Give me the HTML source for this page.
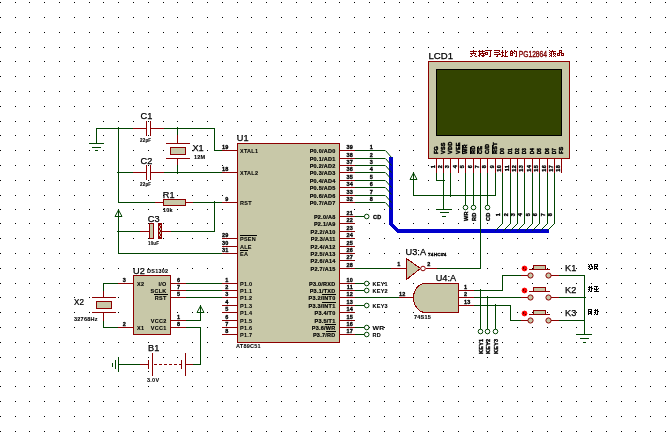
<!DOCTYPE html>
<html><head><meta charset="utf-8"><style>
html,body{margin:0;padding:0;background:#fff;}
svg{display:block;will-change:transform;}
text{font-family:"Liberation Sans",sans-serif;}
</style></head><body>
<svg width="666" height="432" viewBox="0 0 666 432" shape-rendering="crispEdges">
<rect width="666" height="432" fill="#fff"/>
<path d="M0 2h1v1h-1zM0 17h1v1h-1zM0 32h1v1h-1zM0 47h1v1h-1zM0 61h1v1h-1zM0 76h1v1h-1zM0 91h1v1h-1zM0 106h1v1h-1zM0 121h1v1h-1zM0 135h1v1h-1zM0 150h1v1h-1zM0 165h1v1h-1zM0 180h1v1h-1zM0 195h1v1h-1zM0 209h1v1h-1zM0 223h1v1h-1zM0 238h1v1h-1zM0 253h1v1h-1zM0 268h1v1h-1zM0 283h1v1h-1zM0 297h1v1h-1zM0 312h1v1h-1zM0 327h1v1h-1zM0 342h1v1h-1zM0 357h1v1h-1zM0 371h1v1h-1zM0 386h1v1h-1zM0 401h1v1h-1zM0 416h1v1h-1zM0 431h1v1h-1zM15 2h1v1h-1zM15 17h1v1h-1zM15 32h1v1h-1zM15 47h1v1h-1zM15 61h1v1h-1zM15 76h1v1h-1zM15 91h1v1h-1zM15 106h1v1h-1zM15 121h1v1h-1zM15 135h1v1h-1zM15 150h1v1h-1zM15 165h1v1h-1zM15 180h1v1h-1zM15 195h1v1h-1zM15 209h1v1h-1zM15 223h1v1h-1zM15 238h1v1h-1zM15 253h1v1h-1zM15 268h1v1h-1zM15 283h1v1h-1zM15 297h1v1h-1zM15 312h1v1h-1zM15 327h1v1h-1zM15 342h1v1h-1zM15 357h1v1h-1zM15 371h1v1h-1zM15 386h1v1h-1zM15 401h1v1h-1zM15 416h1v1h-1zM15 431h1v1h-1zM29 2h1v1h-1zM29 17h1v1h-1zM29 32h1v1h-1zM29 47h1v1h-1zM29 61h1v1h-1zM29 76h1v1h-1zM29 91h1v1h-1zM29 106h1v1h-1zM29 121h1v1h-1zM29 135h1v1h-1zM29 150h1v1h-1zM29 165h1v1h-1zM29 180h1v1h-1zM29 195h1v1h-1zM29 209h1v1h-1zM29 223h1v1h-1zM29 238h1v1h-1zM29 253h1v1h-1zM29 268h1v1h-1zM29 283h1v1h-1zM29 297h1v1h-1zM29 312h1v1h-1zM29 327h1v1h-1zM29 342h1v1h-1zM29 357h1v1h-1zM29 371h1v1h-1zM29 386h1v1h-1zM29 401h1v1h-1zM29 416h1v1h-1zM29 431h1v1h-1zM44 2h1v1h-1zM44 17h1v1h-1zM44 32h1v1h-1zM44 47h1v1h-1zM44 61h1v1h-1zM44 76h1v1h-1zM44 91h1v1h-1zM44 106h1v1h-1zM44 121h1v1h-1zM44 135h1v1h-1zM44 150h1v1h-1zM44 165h1v1h-1zM44 180h1v1h-1zM44 195h1v1h-1zM44 209h1v1h-1zM44 223h1v1h-1zM44 238h1v1h-1zM44 253h1v1h-1zM44 268h1v1h-1zM44 283h1v1h-1zM44 297h1v1h-1zM44 312h1v1h-1zM44 327h1v1h-1zM44 342h1v1h-1zM44 357h1v1h-1zM44 371h1v1h-1zM44 386h1v1h-1zM44 401h1v1h-1zM44 416h1v1h-1zM44 431h1v1h-1zM59 2h1v1h-1zM59 17h1v1h-1zM59 32h1v1h-1zM59 47h1v1h-1zM59 61h1v1h-1zM59 76h1v1h-1zM59 91h1v1h-1zM59 106h1v1h-1zM59 121h1v1h-1zM59 135h1v1h-1zM59 150h1v1h-1zM59 165h1v1h-1zM59 180h1v1h-1zM59 195h1v1h-1zM59 209h1v1h-1zM59 223h1v1h-1zM59 238h1v1h-1zM59 253h1v1h-1zM59 268h1v1h-1zM59 283h1v1h-1zM59 297h1v1h-1zM59 312h1v1h-1zM59 327h1v1h-1zM59 342h1v1h-1zM59 357h1v1h-1zM59 371h1v1h-1zM59 386h1v1h-1zM59 401h1v1h-1zM59 416h1v1h-1zM59 431h1v1h-1zM74 2h1v1h-1zM74 17h1v1h-1zM74 32h1v1h-1zM74 47h1v1h-1zM74 61h1v1h-1zM74 76h1v1h-1zM74 91h1v1h-1zM74 106h1v1h-1zM74 121h1v1h-1zM74 135h1v1h-1zM74 150h1v1h-1zM74 165h1v1h-1zM74 180h1v1h-1zM74 195h1v1h-1zM74 209h1v1h-1zM74 223h1v1h-1zM74 238h1v1h-1zM74 253h1v1h-1zM74 268h1v1h-1zM74 283h1v1h-1zM74 297h1v1h-1zM74 312h1v1h-1zM74 327h1v1h-1zM74 342h1v1h-1zM74 357h1v1h-1zM74 371h1v1h-1zM74 386h1v1h-1zM74 401h1v1h-1zM74 416h1v1h-1zM74 431h1v1h-1zM89 2h1v1h-1zM89 17h1v1h-1zM89 32h1v1h-1zM89 47h1v1h-1zM89 61h1v1h-1zM89 76h1v1h-1zM89 91h1v1h-1zM89 106h1v1h-1zM89 121h1v1h-1zM89 135h1v1h-1zM89 150h1v1h-1zM89 165h1v1h-1zM89 180h1v1h-1zM89 195h1v1h-1zM89 209h1v1h-1zM89 223h1v1h-1zM89 238h1v1h-1zM89 253h1v1h-1zM89 268h1v1h-1zM89 283h1v1h-1zM89 297h1v1h-1zM89 312h1v1h-1zM89 327h1v1h-1zM89 342h1v1h-1zM89 357h1v1h-1zM89 371h1v1h-1zM89 386h1v1h-1zM89 401h1v1h-1zM89 416h1v1h-1zM89 431h1v1h-1zM103 2h1v1h-1zM103 17h1v1h-1zM103 32h1v1h-1zM103 47h1v1h-1zM103 61h1v1h-1zM103 76h1v1h-1zM103 91h1v1h-1zM103 106h1v1h-1zM103 121h1v1h-1zM103 135h1v1h-1zM103 150h1v1h-1zM103 165h1v1h-1zM103 180h1v1h-1zM103 195h1v1h-1zM103 209h1v1h-1zM103 223h1v1h-1zM103 238h1v1h-1zM103 253h1v1h-1zM103 268h1v1h-1zM103 283h1v1h-1zM103 297h1v1h-1zM103 312h1v1h-1zM103 327h1v1h-1zM103 342h1v1h-1zM103 357h1v1h-1zM103 371h1v1h-1zM103 386h1v1h-1zM103 401h1v1h-1zM103 416h1v1h-1zM103 431h1v1h-1zM118 2h1v1h-1zM118 17h1v1h-1zM118 32h1v1h-1zM118 47h1v1h-1zM118 61h1v1h-1zM118 76h1v1h-1zM118 91h1v1h-1zM118 106h1v1h-1zM118 121h1v1h-1zM118 135h1v1h-1zM118 150h1v1h-1zM118 165h1v1h-1zM118 180h1v1h-1zM118 195h1v1h-1zM118 209h1v1h-1zM118 223h1v1h-1zM118 238h1v1h-1zM118 253h1v1h-1zM118 268h1v1h-1zM118 283h1v1h-1zM118 297h1v1h-1zM118 312h1v1h-1zM118 327h1v1h-1zM118 342h1v1h-1zM118 357h1v1h-1zM118 371h1v1h-1zM118 386h1v1h-1zM118 401h1v1h-1zM118 416h1v1h-1zM118 431h1v1h-1zM133 2h1v1h-1zM133 17h1v1h-1zM133 32h1v1h-1zM133 47h1v1h-1zM133 61h1v1h-1zM133 76h1v1h-1zM133 91h1v1h-1zM133 106h1v1h-1zM133 121h1v1h-1zM133 135h1v1h-1zM133 150h1v1h-1zM133 165h1v1h-1zM133 180h1v1h-1zM133 195h1v1h-1zM133 209h1v1h-1zM133 223h1v1h-1zM133 238h1v1h-1zM133 253h1v1h-1zM133 268h1v1h-1zM133 283h1v1h-1zM133 297h1v1h-1zM133 312h1v1h-1zM133 327h1v1h-1zM133 342h1v1h-1zM133 357h1v1h-1zM133 371h1v1h-1zM133 386h1v1h-1zM133 401h1v1h-1zM133 416h1v1h-1zM133 431h1v1h-1zM148 2h1v1h-1zM148 17h1v1h-1zM148 32h1v1h-1zM148 47h1v1h-1zM148 61h1v1h-1zM148 76h1v1h-1zM148 91h1v1h-1zM148 106h1v1h-1zM148 121h1v1h-1zM148 135h1v1h-1zM148 150h1v1h-1zM148 165h1v1h-1zM148 180h1v1h-1zM148 195h1v1h-1zM148 209h1v1h-1zM148 223h1v1h-1zM148 238h1v1h-1zM148 253h1v1h-1zM148 268h1v1h-1zM148 283h1v1h-1zM148 297h1v1h-1zM148 312h1v1h-1zM148 327h1v1h-1zM148 342h1v1h-1zM148 357h1v1h-1zM148 371h1v1h-1zM148 386h1v1h-1zM148 401h1v1h-1zM148 416h1v1h-1zM148 431h1v1h-1zM163 2h1v1h-1zM163 17h1v1h-1zM163 32h1v1h-1zM163 47h1v1h-1zM163 61h1v1h-1zM163 76h1v1h-1zM163 91h1v1h-1zM163 106h1v1h-1zM163 121h1v1h-1zM163 135h1v1h-1zM163 150h1v1h-1zM163 165h1v1h-1zM163 180h1v1h-1zM163 195h1v1h-1zM163 209h1v1h-1zM163 223h1v1h-1zM163 238h1v1h-1zM163 253h1v1h-1zM163 268h1v1h-1zM163 283h1v1h-1zM163 297h1v1h-1zM163 312h1v1h-1zM163 327h1v1h-1zM163 342h1v1h-1zM163 357h1v1h-1zM163 371h1v1h-1zM163 386h1v1h-1zM163 401h1v1h-1zM163 416h1v1h-1zM163 431h1v1h-1zM177 2h1v1h-1zM177 17h1v1h-1zM177 32h1v1h-1zM177 47h1v1h-1zM177 61h1v1h-1zM177 76h1v1h-1zM177 91h1v1h-1zM177 106h1v1h-1zM177 121h1v1h-1zM177 135h1v1h-1zM177 150h1v1h-1zM177 165h1v1h-1zM177 180h1v1h-1zM177 195h1v1h-1zM177 209h1v1h-1zM177 223h1v1h-1zM177 238h1v1h-1zM177 253h1v1h-1zM177 268h1v1h-1zM177 283h1v1h-1zM177 297h1v1h-1zM177 312h1v1h-1zM177 327h1v1h-1zM177 342h1v1h-1zM177 357h1v1h-1zM177 371h1v1h-1zM177 386h1v1h-1zM177 401h1v1h-1zM177 416h1v1h-1zM177 431h1v1h-1zM192 2h1v1h-1zM192 17h1v1h-1zM192 32h1v1h-1zM192 47h1v1h-1zM192 61h1v1h-1zM192 76h1v1h-1zM192 91h1v1h-1zM192 106h1v1h-1zM192 121h1v1h-1zM192 135h1v1h-1zM192 150h1v1h-1zM192 165h1v1h-1zM192 180h1v1h-1zM192 195h1v1h-1zM192 209h1v1h-1zM192 223h1v1h-1zM192 238h1v1h-1zM192 253h1v1h-1zM192 268h1v1h-1zM192 283h1v1h-1zM192 297h1v1h-1zM192 312h1v1h-1zM192 327h1v1h-1zM192 342h1v1h-1zM192 357h1v1h-1zM192 371h1v1h-1zM192 386h1v1h-1zM192 401h1v1h-1zM192 416h1v1h-1zM192 431h1v1h-1zM207 2h1v1h-1zM207 17h1v1h-1zM207 32h1v1h-1zM207 47h1v1h-1zM207 61h1v1h-1zM207 76h1v1h-1zM207 91h1v1h-1zM207 106h1v1h-1zM207 121h1v1h-1zM207 135h1v1h-1zM207 150h1v1h-1zM207 165h1v1h-1zM207 180h1v1h-1zM207 195h1v1h-1zM207 209h1v1h-1zM207 223h1v1h-1zM207 238h1v1h-1zM207 253h1v1h-1zM207 268h1v1h-1zM207 283h1v1h-1zM207 297h1v1h-1zM207 312h1v1h-1zM207 327h1v1h-1zM207 342h1v1h-1zM207 357h1v1h-1zM207 371h1v1h-1zM207 386h1v1h-1zM207 401h1v1h-1zM207 416h1v1h-1zM207 431h1v1h-1zM222 2h1v1h-1zM222 17h1v1h-1zM222 32h1v1h-1zM222 47h1v1h-1zM222 61h1v1h-1zM222 76h1v1h-1zM222 91h1v1h-1zM222 106h1v1h-1zM222 121h1v1h-1zM222 135h1v1h-1zM222 150h1v1h-1zM222 165h1v1h-1zM222 180h1v1h-1zM222 195h1v1h-1zM222 209h1v1h-1zM222 223h1v1h-1zM222 238h1v1h-1zM222 253h1v1h-1zM222 268h1v1h-1zM222 283h1v1h-1zM222 297h1v1h-1zM222 312h1v1h-1zM222 327h1v1h-1zM222 342h1v1h-1zM222 357h1v1h-1zM222 371h1v1h-1zM222 386h1v1h-1zM222 401h1v1h-1zM222 416h1v1h-1zM222 431h1v1h-1zM237 2h1v1h-1zM237 17h1v1h-1zM237 32h1v1h-1zM237 47h1v1h-1zM237 61h1v1h-1zM237 76h1v1h-1zM237 91h1v1h-1zM237 106h1v1h-1zM237 121h1v1h-1zM237 135h1v1h-1zM237 150h1v1h-1zM237 165h1v1h-1zM237 180h1v1h-1zM237 195h1v1h-1zM237 209h1v1h-1zM237 223h1v1h-1zM237 238h1v1h-1zM237 253h1v1h-1zM237 268h1v1h-1zM237 283h1v1h-1zM237 297h1v1h-1zM237 312h1v1h-1zM237 327h1v1h-1zM237 342h1v1h-1zM237 357h1v1h-1zM237 371h1v1h-1zM237 386h1v1h-1zM237 401h1v1h-1zM237 416h1v1h-1zM237 431h1v1h-1zM251 2h1v1h-1zM251 17h1v1h-1zM251 32h1v1h-1zM251 47h1v1h-1zM251 61h1v1h-1zM251 76h1v1h-1zM251 91h1v1h-1zM251 106h1v1h-1zM251 121h1v1h-1zM251 135h1v1h-1zM251 150h1v1h-1zM251 165h1v1h-1zM251 180h1v1h-1zM251 195h1v1h-1zM251 209h1v1h-1zM251 223h1v1h-1zM251 238h1v1h-1zM251 253h1v1h-1zM251 268h1v1h-1zM251 283h1v1h-1zM251 297h1v1h-1zM251 312h1v1h-1zM251 327h1v1h-1zM251 342h1v1h-1zM251 357h1v1h-1zM251 371h1v1h-1zM251 386h1v1h-1zM251 401h1v1h-1zM251 416h1v1h-1zM251 431h1v1h-1zM266 2h1v1h-1zM266 17h1v1h-1zM266 32h1v1h-1zM266 47h1v1h-1zM266 61h1v1h-1zM266 76h1v1h-1zM266 91h1v1h-1zM266 106h1v1h-1zM266 121h1v1h-1zM266 135h1v1h-1zM266 150h1v1h-1zM266 165h1v1h-1zM266 180h1v1h-1zM266 195h1v1h-1zM266 209h1v1h-1zM266 223h1v1h-1zM266 238h1v1h-1zM266 253h1v1h-1zM266 268h1v1h-1zM266 283h1v1h-1zM266 297h1v1h-1zM266 312h1v1h-1zM266 327h1v1h-1zM266 342h1v1h-1zM266 357h1v1h-1zM266 371h1v1h-1zM266 386h1v1h-1zM266 401h1v1h-1zM266 416h1v1h-1zM266 431h1v1h-1zM281 2h1v1h-1zM281 17h1v1h-1zM281 32h1v1h-1zM281 47h1v1h-1zM281 61h1v1h-1zM281 76h1v1h-1zM281 91h1v1h-1zM281 106h1v1h-1zM281 121h1v1h-1zM281 135h1v1h-1zM281 150h1v1h-1zM281 165h1v1h-1zM281 180h1v1h-1zM281 195h1v1h-1zM281 209h1v1h-1zM281 223h1v1h-1zM281 238h1v1h-1zM281 253h1v1h-1zM281 268h1v1h-1zM281 283h1v1h-1zM281 297h1v1h-1zM281 312h1v1h-1zM281 327h1v1h-1zM281 342h1v1h-1zM281 357h1v1h-1zM281 371h1v1h-1zM281 386h1v1h-1zM281 401h1v1h-1zM281 416h1v1h-1zM281 431h1v1h-1zM296 2h1v1h-1zM296 17h1v1h-1zM296 32h1v1h-1zM296 47h1v1h-1zM296 61h1v1h-1zM296 76h1v1h-1zM296 91h1v1h-1zM296 106h1v1h-1zM296 121h1v1h-1zM296 135h1v1h-1zM296 150h1v1h-1zM296 165h1v1h-1zM296 180h1v1h-1zM296 195h1v1h-1zM296 209h1v1h-1zM296 223h1v1h-1zM296 238h1v1h-1zM296 253h1v1h-1zM296 268h1v1h-1zM296 283h1v1h-1zM296 297h1v1h-1zM296 312h1v1h-1zM296 327h1v1h-1zM296 342h1v1h-1zM296 357h1v1h-1zM296 371h1v1h-1zM296 386h1v1h-1zM296 401h1v1h-1zM296 416h1v1h-1zM296 431h1v1h-1zM311 2h1v1h-1zM311 17h1v1h-1zM311 32h1v1h-1zM311 47h1v1h-1zM311 61h1v1h-1zM311 76h1v1h-1zM311 91h1v1h-1zM311 106h1v1h-1zM311 121h1v1h-1zM311 135h1v1h-1zM311 150h1v1h-1zM311 165h1v1h-1zM311 180h1v1h-1zM311 195h1v1h-1zM311 209h1v1h-1zM311 223h1v1h-1zM311 238h1v1h-1zM311 253h1v1h-1zM311 268h1v1h-1zM311 283h1v1h-1zM311 297h1v1h-1zM311 312h1v1h-1zM311 327h1v1h-1zM311 342h1v1h-1zM311 357h1v1h-1zM311 371h1v1h-1zM311 386h1v1h-1zM311 401h1v1h-1zM311 416h1v1h-1zM311 431h1v1h-1zM325 2h1v1h-1zM325 17h1v1h-1zM325 32h1v1h-1zM325 47h1v1h-1zM325 61h1v1h-1zM325 76h1v1h-1zM325 91h1v1h-1zM325 106h1v1h-1zM325 121h1v1h-1zM325 135h1v1h-1zM325 150h1v1h-1zM325 165h1v1h-1zM325 180h1v1h-1zM325 195h1v1h-1zM325 209h1v1h-1zM325 223h1v1h-1zM325 238h1v1h-1zM325 253h1v1h-1zM325 268h1v1h-1zM325 283h1v1h-1zM325 297h1v1h-1zM325 312h1v1h-1zM325 327h1v1h-1zM325 342h1v1h-1zM325 357h1v1h-1zM325 371h1v1h-1zM325 386h1v1h-1zM325 401h1v1h-1zM325 416h1v1h-1zM325 431h1v1h-1zM339 2h1v1h-1zM339 17h1v1h-1zM339 32h1v1h-1zM339 47h1v1h-1zM339 61h1v1h-1zM339 76h1v1h-1zM339 91h1v1h-1zM339 106h1v1h-1zM339 121h1v1h-1zM339 135h1v1h-1zM339 150h1v1h-1zM339 165h1v1h-1zM339 180h1v1h-1zM339 195h1v1h-1zM339 209h1v1h-1zM339 223h1v1h-1zM339 238h1v1h-1zM339 253h1v1h-1zM339 268h1v1h-1zM339 283h1v1h-1zM339 297h1v1h-1zM339 312h1v1h-1zM339 327h1v1h-1zM339 342h1v1h-1zM339 357h1v1h-1zM339 371h1v1h-1zM339 386h1v1h-1zM339 401h1v1h-1zM339 416h1v1h-1zM339 431h1v1h-1zM354 2h1v1h-1zM354 17h1v1h-1zM354 32h1v1h-1zM354 47h1v1h-1zM354 61h1v1h-1zM354 76h1v1h-1zM354 91h1v1h-1zM354 106h1v1h-1zM354 121h1v1h-1zM354 135h1v1h-1zM354 150h1v1h-1zM354 165h1v1h-1zM354 180h1v1h-1zM354 195h1v1h-1zM354 209h1v1h-1zM354 223h1v1h-1zM354 238h1v1h-1zM354 253h1v1h-1zM354 268h1v1h-1zM354 283h1v1h-1zM354 297h1v1h-1zM354 312h1v1h-1zM354 327h1v1h-1zM354 342h1v1h-1zM354 357h1v1h-1zM354 371h1v1h-1zM354 386h1v1h-1zM354 401h1v1h-1zM354 416h1v1h-1zM354 431h1v1h-1zM369 2h1v1h-1zM369 17h1v1h-1zM369 32h1v1h-1zM369 47h1v1h-1zM369 61h1v1h-1zM369 76h1v1h-1zM369 91h1v1h-1zM369 106h1v1h-1zM369 121h1v1h-1zM369 135h1v1h-1zM369 150h1v1h-1zM369 165h1v1h-1zM369 180h1v1h-1zM369 195h1v1h-1zM369 209h1v1h-1zM369 223h1v1h-1zM369 238h1v1h-1zM369 253h1v1h-1zM369 268h1v1h-1zM369 283h1v1h-1zM369 297h1v1h-1zM369 312h1v1h-1zM369 327h1v1h-1zM369 342h1v1h-1zM369 357h1v1h-1zM369 371h1v1h-1zM369 386h1v1h-1zM369 401h1v1h-1zM369 416h1v1h-1zM369 431h1v1h-1zM384 2h1v1h-1zM384 17h1v1h-1zM384 32h1v1h-1zM384 47h1v1h-1zM384 61h1v1h-1zM384 76h1v1h-1zM384 91h1v1h-1zM384 106h1v1h-1zM384 121h1v1h-1zM384 135h1v1h-1zM384 150h1v1h-1zM384 165h1v1h-1zM384 180h1v1h-1zM384 195h1v1h-1zM384 209h1v1h-1zM384 223h1v1h-1zM384 238h1v1h-1zM384 253h1v1h-1zM384 268h1v1h-1zM384 283h1v1h-1zM384 297h1v1h-1zM384 312h1v1h-1zM384 327h1v1h-1zM384 342h1v1h-1zM384 357h1v1h-1zM384 371h1v1h-1zM384 386h1v1h-1zM384 401h1v1h-1zM384 416h1v1h-1zM384 431h1v1h-1zM399 2h1v1h-1zM399 17h1v1h-1zM399 32h1v1h-1zM399 47h1v1h-1zM399 61h1v1h-1zM399 76h1v1h-1zM399 91h1v1h-1zM399 106h1v1h-1zM399 121h1v1h-1zM399 135h1v1h-1zM399 150h1v1h-1zM399 165h1v1h-1zM399 180h1v1h-1zM399 195h1v1h-1zM399 209h1v1h-1zM399 223h1v1h-1zM399 238h1v1h-1zM399 253h1v1h-1zM399 268h1v1h-1zM399 283h1v1h-1zM399 297h1v1h-1zM399 312h1v1h-1zM399 327h1v1h-1zM399 342h1v1h-1zM399 357h1v1h-1zM399 371h1v1h-1zM399 386h1v1h-1zM399 401h1v1h-1zM399 416h1v1h-1zM399 431h1v1h-1zM413 2h1v1h-1zM413 17h1v1h-1zM413 32h1v1h-1zM413 47h1v1h-1zM413 61h1v1h-1zM413 76h1v1h-1zM413 91h1v1h-1zM413 106h1v1h-1zM413 121h1v1h-1zM413 135h1v1h-1zM413 150h1v1h-1zM413 165h1v1h-1zM413 180h1v1h-1zM413 195h1v1h-1zM413 209h1v1h-1zM413 223h1v1h-1zM413 238h1v1h-1zM413 253h1v1h-1zM413 268h1v1h-1zM413 283h1v1h-1zM413 297h1v1h-1zM413 312h1v1h-1zM413 327h1v1h-1zM413 342h1v1h-1zM413 357h1v1h-1zM413 371h1v1h-1zM413 386h1v1h-1zM413 401h1v1h-1zM413 416h1v1h-1zM413 431h1v1h-1zM428 2h1v1h-1zM428 17h1v1h-1zM428 32h1v1h-1zM428 47h1v1h-1zM428 61h1v1h-1zM428 76h1v1h-1zM428 91h1v1h-1zM428 106h1v1h-1zM428 121h1v1h-1zM428 135h1v1h-1zM428 150h1v1h-1zM428 165h1v1h-1zM428 180h1v1h-1zM428 195h1v1h-1zM428 209h1v1h-1zM428 223h1v1h-1zM428 238h1v1h-1zM428 253h1v1h-1zM428 268h1v1h-1zM428 283h1v1h-1zM428 297h1v1h-1zM428 312h1v1h-1zM428 327h1v1h-1zM428 342h1v1h-1zM428 357h1v1h-1zM428 371h1v1h-1zM428 386h1v1h-1zM428 401h1v1h-1zM428 416h1v1h-1zM428 431h1v1h-1zM443 2h1v1h-1zM443 17h1v1h-1zM443 32h1v1h-1zM443 47h1v1h-1zM443 61h1v1h-1zM443 76h1v1h-1zM443 91h1v1h-1zM443 106h1v1h-1zM443 121h1v1h-1zM443 135h1v1h-1zM443 150h1v1h-1zM443 165h1v1h-1zM443 180h1v1h-1zM443 195h1v1h-1zM443 209h1v1h-1zM443 223h1v1h-1zM443 238h1v1h-1zM443 253h1v1h-1zM443 268h1v1h-1zM443 283h1v1h-1zM443 297h1v1h-1zM443 312h1v1h-1zM443 327h1v1h-1zM443 342h1v1h-1zM443 357h1v1h-1zM443 371h1v1h-1zM443 386h1v1h-1zM443 401h1v1h-1zM443 416h1v1h-1zM443 431h1v1h-1zM458 2h1v1h-1zM458 17h1v1h-1zM458 32h1v1h-1zM458 47h1v1h-1zM458 61h1v1h-1zM458 76h1v1h-1zM458 91h1v1h-1zM458 106h1v1h-1zM458 121h1v1h-1zM458 135h1v1h-1zM458 150h1v1h-1zM458 165h1v1h-1zM458 180h1v1h-1zM458 195h1v1h-1zM458 209h1v1h-1zM458 223h1v1h-1zM458 238h1v1h-1zM458 253h1v1h-1zM458 268h1v1h-1zM458 283h1v1h-1zM458 297h1v1h-1zM458 312h1v1h-1zM458 327h1v1h-1zM458 342h1v1h-1zM458 357h1v1h-1zM458 371h1v1h-1zM458 386h1v1h-1zM458 401h1v1h-1zM458 416h1v1h-1zM458 431h1v1h-1zM473 2h1v1h-1zM473 17h1v1h-1zM473 32h1v1h-1zM473 47h1v1h-1zM473 61h1v1h-1zM473 76h1v1h-1zM473 91h1v1h-1zM473 106h1v1h-1zM473 121h1v1h-1zM473 135h1v1h-1zM473 150h1v1h-1zM473 165h1v1h-1zM473 180h1v1h-1zM473 195h1v1h-1zM473 209h1v1h-1zM473 223h1v1h-1zM473 238h1v1h-1zM473 253h1v1h-1zM473 268h1v1h-1zM473 283h1v1h-1zM473 297h1v1h-1zM473 312h1v1h-1zM473 327h1v1h-1zM473 342h1v1h-1zM473 357h1v1h-1zM473 371h1v1h-1zM473 386h1v1h-1zM473 401h1v1h-1zM473 416h1v1h-1zM473 431h1v1h-1zM487 2h1v1h-1zM487 17h1v1h-1zM487 32h1v1h-1zM487 47h1v1h-1zM487 61h1v1h-1zM487 76h1v1h-1zM487 91h1v1h-1zM487 106h1v1h-1zM487 121h1v1h-1zM487 135h1v1h-1zM487 150h1v1h-1zM487 165h1v1h-1zM487 180h1v1h-1zM487 195h1v1h-1zM487 209h1v1h-1zM487 223h1v1h-1zM487 238h1v1h-1zM487 253h1v1h-1zM487 268h1v1h-1zM487 283h1v1h-1zM487 297h1v1h-1zM487 312h1v1h-1zM487 327h1v1h-1zM487 342h1v1h-1zM487 357h1v1h-1zM487 371h1v1h-1zM487 386h1v1h-1zM487 401h1v1h-1zM487 416h1v1h-1zM487 431h1v1h-1zM502 2h1v1h-1zM502 17h1v1h-1zM502 32h1v1h-1zM502 47h1v1h-1zM502 61h1v1h-1zM502 76h1v1h-1zM502 91h1v1h-1zM502 106h1v1h-1zM502 121h1v1h-1zM502 135h1v1h-1zM502 150h1v1h-1zM502 165h1v1h-1zM502 180h1v1h-1zM502 195h1v1h-1zM502 209h1v1h-1zM502 223h1v1h-1zM502 238h1v1h-1zM502 253h1v1h-1zM502 268h1v1h-1zM502 283h1v1h-1zM502 297h1v1h-1zM502 312h1v1h-1zM502 327h1v1h-1zM502 342h1v1h-1zM502 357h1v1h-1zM502 371h1v1h-1zM502 386h1v1h-1zM502 401h1v1h-1zM502 416h1v1h-1zM502 431h1v1h-1zM517 2h1v1h-1zM517 17h1v1h-1zM517 32h1v1h-1zM517 47h1v1h-1zM517 61h1v1h-1zM517 76h1v1h-1zM517 91h1v1h-1zM517 106h1v1h-1zM517 121h1v1h-1zM517 135h1v1h-1zM517 150h1v1h-1zM517 165h1v1h-1zM517 180h1v1h-1zM517 195h1v1h-1zM517 209h1v1h-1zM517 223h1v1h-1zM517 238h1v1h-1zM517 253h1v1h-1zM517 268h1v1h-1zM517 283h1v1h-1zM517 297h1v1h-1zM517 312h1v1h-1zM517 327h1v1h-1zM517 342h1v1h-1zM517 357h1v1h-1zM517 371h1v1h-1zM517 386h1v1h-1zM517 401h1v1h-1zM517 416h1v1h-1zM517 431h1v1h-1zM532 2h1v1h-1zM532 17h1v1h-1zM532 32h1v1h-1zM532 47h1v1h-1zM532 61h1v1h-1zM532 76h1v1h-1zM532 91h1v1h-1zM532 106h1v1h-1zM532 121h1v1h-1zM532 135h1v1h-1zM532 150h1v1h-1zM532 165h1v1h-1zM532 180h1v1h-1zM532 195h1v1h-1zM532 209h1v1h-1zM532 223h1v1h-1zM532 238h1v1h-1zM532 253h1v1h-1zM532 268h1v1h-1zM532 283h1v1h-1zM532 297h1v1h-1zM532 312h1v1h-1zM532 327h1v1h-1zM532 342h1v1h-1zM532 357h1v1h-1zM532 371h1v1h-1zM532 386h1v1h-1zM532 401h1v1h-1zM532 416h1v1h-1zM532 431h1v1h-1zM547 2h1v1h-1zM547 17h1v1h-1zM547 32h1v1h-1zM547 47h1v1h-1zM547 61h1v1h-1zM547 76h1v1h-1zM547 91h1v1h-1zM547 106h1v1h-1zM547 121h1v1h-1zM547 135h1v1h-1zM547 150h1v1h-1zM547 165h1v1h-1zM547 180h1v1h-1zM547 195h1v1h-1zM547 209h1v1h-1zM547 223h1v1h-1zM547 238h1v1h-1zM547 253h1v1h-1zM547 268h1v1h-1zM547 283h1v1h-1zM547 297h1v1h-1zM547 312h1v1h-1zM547 327h1v1h-1zM547 342h1v1h-1zM547 357h1v1h-1zM547 371h1v1h-1zM547 386h1v1h-1zM547 401h1v1h-1zM547 416h1v1h-1zM547 431h1v1h-1zM561 2h1v1h-1zM561 17h1v1h-1zM561 32h1v1h-1zM561 47h1v1h-1zM561 61h1v1h-1zM561 76h1v1h-1zM561 91h1v1h-1zM561 106h1v1h-1zM561 121h1v1h-1zM561 135h1v1h-1zM561 150h1v1h-1zM561 165h1v1h-1zM561 180h1v1h-1zM561 195h1v1h-1zM561 209h1v1h-1zM561 223h1v1h-1zM561 238h1v1h-1zM561 253h1v1h-1zM561 268h1v1h-1zM561 283h1v1h-1zM561 297h1v1h-1zM561 312h1v1h-1zM561 327h1v1h-1zM561 342h1v1h-1zM561 357h1v1h-1zM561 371h1v1h-1zM561 386h1v1h-1zM561 401h1v1h-1zM561 416h1v1h-1zM561 431h1v1h-1zM576 2h1v1h-1zM576 17h1v1h-1zM576 32h1v1h-1zM576 47h1v1h-1zM576 61h1v1h-1zM576 76h1v1h-1zM576 91h1v1h-1zM576 106h1v1h-1zM576 121h1v1h-1zM576 135h1v1h-1zM576 150h1v1h-1zM576 165h1v1h-1zM576 180h1v1h-1zM576 195h1v1h-1zM576 209h1v1h-1zM576 223h1v1h-1zM576 238h1v1h-1zM576 253h1v1h-1zM576 268h1v1h-1zM576 283h1v1h-1zM576 297h1v1h-1zM576 312h1v1h-1zM576 327h1v1h-1zM576 342h1v1h-1zM576 357h1v1h-1zM576 371h1v1h-1zM576 386h1v1h-1zM576 401h1v1h-1zM576 416h1v1h-1zM576 431h1v1h-1zM591 2h1v1h-1zM591 17h1v1h-1zM591 32h1v1h-1zM591 47h1v1h-1zM591 61h1v1h-1zM591 76h1v1h-1zM591 91h1v1h-1zM591 106h1v1h-1zM591 121h1v1h-1zM591 135h1v1h-1zM591 150h1v1h-1zM591 165h1v1h-1zM591 180h1v1h-1zM591 195h1v1h-1zM591 209h1v1h-1zM591 223h1v1h-1zM591 238h1v1h-1zM591 253h1v1h-1zM591 268h1v1h-1zM591 283h1v1h-1zM591 297h1v1h-1zM591 312h1v1h-1zM591 327h1v1h-1zM591 342h1v1h-1zM591 357h1v1h-1zM591 371h1v1h-1zM591 386h1v1h-1zM591 401h1v1h-1zM591 416h1v1h-1zM591 431h1v1h-1zM606 2h1v1h-1zM606 17h1v1h-1zM606 32h1v1h-1zM606 47h1v1h-1zM606 61h1v1h-1zM606 76h1v1h-1zM606 91h1v1h-1zM606 106h1v1h-1zM606 121h1v1h-1zM606 135h1v1h-1zM606 150h1v1h-1zM606 165h1v1h-1zM606 180h1v1h-1zM606 195h1v1h-1zM606 209h1v1h-1zM606 223h1v1h-1zM606 238h1v1h-1zM606 253h1v1h-1zM606 268h1v1h-1zM606 283h1v1h-1zM606 297h1v1h-1zM606 312h1v1h-1zM606 327h1v1h-1zM606 342h1v1h-1zM606 357h1v1h-1zM606 371h1v1h-1zM606 386h1v1h-1zM606 401h1v1h-1zM606 416h1v1h-1zM606 431h1v1h-1zM621 2h1v1h-1zM621 17h1v1h-1zM621 32h1v1h-1zM621 47h1v1h-1zM621 61h1v1h-1zM621 76h1v1h-1zM621 91h1v1h-1zM621 106h1v1h-1zM621 121h1v1h-1zM621 135h1v1h-1zM621 150h1v1h-1zM621 165h1v1h-1zM621 180h1v1h-1zM621 195h1v1h-1zM621 209h1v1h-1zM621 223h1v1h-1zM621 238h1v1h-1zM621 253h1v1h-1zM621 268h1v1h-1zM621 283h1v1h-1zM621 297h1v1h-1zM621 312h1v1h-1zM621 327h1v1h-1zM621 342h1v1h-1zM621 357h1v1h-1zM621 371h1v1h-1zM621 386h1v1h-1zM621 401h1v1h-1zM621 416h1v1h-1zM621 431h1v1h-1zM635 2h1v1h-1zM635 17h1v1h-1zM635 32h1v1h-1zM635 47h1v1h-1zM635 61h1v1h-1zM635 76h1v1h-1zM635 91h1v1h-1zM635 106h1v1h-1zM635 121h1v1h-1zM635 135h1v1h-1zM635 150h1v1h-1zM635 165h1v1h-1zM635 180h1v1h-1zM635 195h1v1h-1zM635 209h1v1h-1zM635 223h1v1h-1zM635 238h1v1h-1zM635 253h1v1h-1zM635 268h1v1h-1zM635 283h1v1h-1zM635 297h1v1h-1zM635 312h1v1h-1zM635 327h1v1h-1zM635 342h1v1h-1zM635 357h1v1h-1zM635 371h1v1h-1zM635 386h1v1h-1zM635 401h1v1h-1zM635 416h1v1h-1zM635 431h1v1h-1zM650 2h1v1h-1zM650 17h1v1h-1zM650 32h1v1h-1zM650 47h1v1h-1zM650 61h1v1h-1zM650 76h1v1h-1zM650 91h1v1h-1zM650 106h1v1h-1zM650 121h1v1h-1zM650 135h1v1h-1zM650 150h1v1h-1zM650 165h1v1h-1zM650 180h1v1h-1zM650 195h1v1h-1zM650 209h1v1h-1zM650 223h1v1h-1zM650 238h1v1h-1zM650 253h1v1h-1zM650 268h1v1h-1zM650 283h1v1h-1zM650 297h1v1h-1zM650 312h1v1h-1zM650 327h1v1h-1zM650 342h1v1h-1zM650 357h1v1h-1zM650 371h1v1h-1zM650 386h1v1h-1zM650 401h1v1h-1zM650 416h1v1h-1zM650 431h1v1h-1zM665 2h1v1h-1zM665 17h1v1h-1zM665 32h1v1h-1zM665 47h1v1h-1zM665 61h1v1h-1zM665 76h1v1h-1zM665 91h1v1h-1zM665 106h1v1h-1zM665 121h1v1h-1zM665 135h1v1h-1zM665 150h1v1h-1zM665 165h1v1h-1zM665 180h1v1h-1zM665 195h1v1h-1zM665 209h1v1h-1zM665 223h1v1h-1zM665 238h1v1h-1zM665 253h1v1h-1zM665 268h1v1h-1zM665 283h1v1h-1zM665 297h1v1h-1zM665 312h1v1h-1zM665 327h1v1h-1zM665 342h1v1h-1zM665 357h1v1h-1zM665 371h1v1h-1zM665 386h1v1h-1zM665 401h1v1h-1zM665 416h1v1h-1zM665 431h1v1h-1z" fill="#000"/>
<path d="M391 157V224L398 231H549" stroke="#0000cc" stroke-width="4" fill="none" stroke-linejoin="miter"/>
<rect x="96" y="128" width="1" height="16" fill="#004400"/>
<rect x="96" y="128" width="37" height="1" fill="#004400"/>
<rect x="89" y="143" width="15" height="1" fill="#004400"/>
<rect x="92" y="147" width="9" height="1" fill="#004400"/>
<rect x="95" y="150" width="3" height="1" fill="#004400"/>
<rect x="133" y="128" width="13" height="1" fill="#8c0000"/>
<rect x="146" y="121" width="1" height="15" fill="#8c0000"/>
<rect x="150" y="121" width="1" height="15" fill="#8c0000"/>
<rect x="151" y="128" width="13" height="1" fill="#8c0000"/>
<rect x="164" y="128" width="51" height="1" fill="#004400"/>
<rect x="214" y="128" width="1" height="23" fill="#004400"/>
<rect x="214" y="150" width="8" height="1" fill="#004400"/>
<rect x="118" y="128" width="1" height="75" fill="#004400"/>
<text x="140.5" y="119" font-size="9.2" font-weight="normal" text-anchor="start" fill="#000000" stroke="#000000" stroke-width="0.25">C1</text>
<text x="0" y="0" font-size="5.5" font-weight="bold" text-anchor="start" fill="#000000" transform="translate(140 142.3) scale(0.82 1)" letter-spacing="0.25" stroke="#000000" stroke-width="0.1">22pF</text>
<rect x="177" y="128" width="1" height="7" fill="#004400"/>
<rect x="177" y="135" width="1" height="9" fill="#8c0000"/>
<rect x="166" y="143" width="24" height="1" fill="#8c0000"/>
<rect x="170" y="147" width="16" height="8" fill="#8c0000"/>
<rect x="171" y="148" width="14" height="6" fill="#c8c8a8"/>
<rect x="166" y="158" width="24" height="1" fill="#8c0000"/>
<rect x="177" y="158" width="1" height="8" fill="#8c0000"/>
<rect x="177" y="165" width="1" height="8" fill="#004400"/>
<text x="192.4" y="151" font-size="9.2" font-weight="normal" text-anchor="start" fill="#000000" stroke="#000000" stroke-width="0.25">X1</text>
<text x="194" y="159" font-size="5.5" font-weight="bold" text-anchor="start" fill="#000000" letter-spacing="0.25" stroke="#000000" stroke-width="0.1">12M</text>
<rect x="118" y="172" width="15" height="1" fill="#004400"/>
<rect x="133" y="172" width="13" height="1" fill="#8c0000"/>
<rect x="146" y="165" width="1" height="15" fill="#8c0000"/>
<rect x="150" y="165" width="1" height="15" fill="#8c0000"/>
<rect x="151" y="172" width="13" height="1" fill="#8c0000"/>
<rect x="164" y="172" width="58" height="1" fill="#004400"/>
<text x="140.5" y="164" font-size="9.2" font-weight="normal" text-anchor="start" fill="#000000" stroke="#000000" stroke-width="0.25">C2</text>
<text x="0" y="0" font-size="5.5" font-weight="bold" text-anchor="start" fill="#000000" transform="translate(140 186) scale(0.82 1)" letter-spacing="0.25" stroke="#000000" stroke-width="0.1">22pF</text>
<rect x="118" y="202" width="37" height="1" fill="#004400"/>
<rect x="155" y="202" width="8" height="1" fill="#8c0000"/>
<rect x="163" y="199" width="23" height="7" fill="#8c0000"/>
<rect x="164" y="200" width="21" height="5" fill="#c8c8a8"/>
<rect x="186" y="202" width="7" height="1" fill="#8c0000"/>
<rect x="193" y="202" width="29" height="1" fill="#004400"/>
<rect x="214" y="202" width="1" height="30" fill="#004400"/>
<text x="162.8" y="198" font-size="9.2" font-weight="normal" text-anchor="start" fill="#000000" stroke="#000000" stroke-width="0.25">R1</text>
<text x="163" y="212" font-size="5.5" font-weight="bold" text-anchor="start" fill="#000000" letter-spacing="0.25" stroke="#000000" stroke-width="0.1">10k</text>
<path d="M118.5 210L122 216.5L115 216.5Z" stroke="#004400" stroke-width="1" fill="none" shape-rendering="geometricPrecision"/>
<rect x="118" y="209" width="1" height="45" fill="#004400"/>
<rect x="118" y="231" width="22" height="1" fill="#004400"/>
<rect x="140" y="231" width="9" height="1" fill="#8c0000"/>
<rect x="149" y="223" width="5" height="16" fill="#8c0000"/>
<rect x="150" y="224" width="3" height="14" fill="#c8c8a8"/>
<rect x="158" y="223" width="4" height="16" fill="#8c0000"/>
<rect x="160" y="225" width="1" height="1" fill="#d0d4b0"/>
<rect x="159" y="226" width="1" height="1" fill="#d0d4b0"/>
<rect x="159" y="227" width="1" height="1" fill="#d0d4b0"/>
<rect x="160" y="228" width="1" height="1" fill="#d0d4b0"/>
<rect x="160" y="229" width="1" height="1" fill="#d0d4b0"/>
<rect x="159" y="230" width="1" height="1" fill="#d0d4b0"/>
<rect x="159" y="231" width="1" height="1" fill="#d0d4b0"/>
<rect x="160" y="232" width="1" height="1" fill="#d0d4b0"/>
<rect x="160" y="233" width="1" height="1" fill="#d0d4b0"/>
<rect x="159" y="234" width="1" height="1" fill="#d0d4b0"/>
<rect x="159" y="235" width="1" height="1" fill="#d0d4b0"/>
<rect x="160" y="236" width="1" height="1" fill="#d0d4b0"/>
<rect x="162" y="231" width="9" height="1" fill="#8c0000"/>
<rect x="171" y="231" width="44" height="1" fill="#004400"/>
<text x="147.8" y="222" font-size="9.2" font-weight="normal" text-anchor="start" fill="#000000" stroke="#000000" stroke-width="0.25">C3</text>
<text x="0" y="0" font-size="5.5" font-weight="bold" text-anchor="start" fill="#000000" transform="translate(148 245) scale(0.8 1)" letter-spacing="0.25" stroke="#000000" stroke-width="0.1">10uF</text>
<rect x="118" y="253" width="104" height="1" fill="#004400"/>
<rect x="237" y="143" width="103" height="200" fill="#8c0000"/>
<rect x="238" y="144" width="101" height="198" fill="#c8c8a8"/>
<text x="236.8" y="141" font-size="9.2" font-weight="normal" text-anchor="start" fill="#000000" stroke="#000000" stroke-width="0.25">U1</text>
<rect x="222" y="150" width="15" height="1" fill="#8c0000"/>
<text x="228.5" y="148.5" font-size="5.5" font-weight="bold" text-anchor="end" fill="#000000" letter-spacing="0.25" stroke="#000000" stroke-width="0.32">19</text>
<text x="240" y="152.5" font-size="5.5" font-weight="bold" text-anchor="start" fill="#000000" letter-spacing="0.25" stroke="#000000" stroke-width="0.05">XTAL1</text>
<rect x="222" y="172" width="15" height="1" fill="#8c0000"/>
<text x="228.5" y="170.5" font-size="5.5" font-weight="bold" text-anchor="end" fill="#000000" letter-spacing="0.25" stroke="#000000" stroke-width="0.32">18</text>
<text x="240" y="174.5" font-size="5.5" font-weight="bold" text-anchor="start" fill="#000000" letter-spacing="0.25" stroke="#000000" stroke-width="0.05">XTAL2</text>
<rect x="222" y="202" width="15" height="1" fill="#8c0000"/>
<text x="228.5" y="200.5" font-size="5.5" font-weight="bold" text-anchor="end" fill="#000000" letter-spacing="0.25" stroke="#000000" stroke-width="0.32">9</text>
<text x="240" y="204.5" font-size="5.5" font-weight="bold" text-anchor="start" fill="#000000" letter-spacing="0.25" stroke="#000000" stroke-width="0.05">RST</text>
<rect x="222" y="238" width="15" height="1" fill="#8c0000"/>
<text x="228.5" y="236.5" font-size="5.5" font-weight="bold" text-anchor="end" fill="#000000" letter-spacing="0.25" stroke="#000000" stroke-width="0.32">29</text>
<text x="240" y="240.5" font-size="5.5" font-weight="bold" text-anchor="start" fill="#000000" letter-spacing="0.25" stroke="#000000" stroke-width="0.05">PSEN</text>
<rect x="222" y="246" width="15" height="1" fill="#8c0000"/>
<text x="228.5" y="244.5" font-size="5.5" font-weight="bold" text-anchor="end" fill="#000000" letter-spacing="0.25" stroke="#000000" stroke-width="0.32">30</text>
<text x="240" y="248.5" font-size="5.5" font-weight="bold" text-anchor="start" fill="#000000" letter-spacing="0.25" stroke="#000000" stroke-width="0.05">ALE</text>
<rect x="222" y="253" width="15" height="1" fill="#8c0000"/>
<text x="228.5" y="251.5" font-size="5.5" font-weight="bold" text-anchor="end" fill="#000000" letter-spacing="0.25" stroke="#000000" stroke-width="0.32">31</text>
<text x="240" y="255.5" font-size="5.5" font-weight="bold" text-anchor="start" fill="#000000" letter-spacing="0.25" stroke="#000000" stroke-width="0.05">EA</text>
<rect x="222" y="283" width="15" height="1" fill="#8c0000"/>
<text x="228.5" y="281.5" font-size="5.5" font-weight="bold" text-anchor="end" fill="#000000" letter-spacing="0.25" stroke="#000000" stroke-width="0.32">1</text>
<text x="240" y="285.5" font-size="5.5" font-weight="bold" text-anchor="start" fill="#000000" letter-spacing="0.25" stroke="#000000" stroke-width="0.05">P1.0</text>
<rect x="222" y="290" width="15" height="1" fill="#8c0000"/>
<text x="228.5" y="288.5" font-size="5.5" font-weight="bold" text-anchor="end" fill="#000000" letter-spacing="0.25" stroke="#000000" stroke-width="0.32">2</text>
<text x="240" y="292.5" font-size="5.5" font-weight="bold" text-anchor="start" fill="#000000" letter-spacing="0.25" stroke="#000000" stroke-width="0.05">P1.1</text>
<rect x="222" y="297" width="15" height="1" fill="#8c0000"/>
<text x="228.5" y="295.5" font-size="5.5" font-weight="bold" text-anchor="end" fill="#000000" letter-spacing="0.25" stroke="#000000" stroke-width="0.32">3</text>
<text x="240" y="299.5" font-size="5.5" font-weight="bold" text-anchor="start" fill="#000000" letter-spacing="0.25" stroke="#000000" stroke-width="0.05">P1.2</text>
<rect x="222" y="305" width="15" height="1" fill="#8c0000"/>
<text x="228.5" y="303.5" font-size="5.5" font-weight="bold" text-anchor="end" fill="#000000" letter-spacing="0.25" stroke="#000000" stroke-width="0.32">4</text>
<text x="240" y="307.5" font-size="5.5" font-weight="bold" text-anchor="start" fill="#000000" letter-spacing="0.25" stroke="#000000" stroke-width="0.05">P1.3</text>
<rect x="222" y="312" width="15" height="1" fill="#8c0000"/>
<text x="228.5" y="310.5" font-size="5.5" font-weight="bold" text-anchor="end" fill="#000000" letter-spacing="0.25" stroke="#000000" stroke-width="0.32">5</text>
<text x="240" y="314.5" font-size="5.5" font-weight="bold" text-anchor="start" fill="#000000" letter-spacing="0.25" stroke="#000000" stroke-width="0.05">P1.4</text>
<rect x="222" y="320" width="15" height="1" fill="#8c0000"/>
<text x="228.5" y="318.5" font-size="5.5" font-weight="bold" text-anchor="end" fill="#000000" letter-spacing="0.25" stroke="#000000" stroke-width="0.32">6</text>
<text x="240" y="322.5" font-size="5.5" font-weight="bold" text-anchor="start" fill="#000000" letter-spacing="0.25" stroke="#000000" stroke-width="0.05">P1.5</text>
<rect x="222" y="327" width="15" height="1" fill="#8c0000"/>
<text x="228.5" y="325.5" font-size="5.5" font-weight="bold" text-anchor="end" fill="#000000" letter-spacing="0.25" stroke="#000000" stroke-width="0.32">7</text>
<text x="240" y="329.5" font-size="5.5" font-weight="bold" text-anchor="start" fill="#000000" letter-spacing="0.25" stroke="#000000" stroke-width="0.05">P1.6</text>
<rect x="222" y="334" width="15" height="1" fill="#8c0000"/>
<text x="228.5" y="332.5" font-size="5.5" font-weight="bold" text-anchor="end" fill="#000000" letter-spacing="0.25" stroke="#000000" stroke-width="0.32">8</text>
<text x="240" y="336.5" font-size="5.5" font-weight="bold" text-anchor="start" fill="#000000" letter-spacing="0.25" stroke="#000000" stroke-width="0.05">P1.7</text>
<rect x="240" y="235" width="17" height="1" fill="#000000"/>
<rect x="240" y="250" width="8" height="1" fill="#000000"/>
<rect x="340" y="150" width="15" height="1" fill="#8c0000"/>
<text x="353" y="148.5" font-size="5.5" font-weight="bold" text-anchor="end" fill="#000000" letter-spacing="0.25" stroke="#000000" stroke-width="0.32">39</text>
<text x="335.5" y="152.5" font-size="5.5" font-weight="bold" text-anchor="end" fill="#000000" letter-spacing="0.25" stroke="#000000" stroke-width="0.2">P0.0/AD0</text>
<rect x="340" y="158" width="15" height="1" fill="#8c0000"/>
<text x="353" y="156.5" font-size="5.5" font-weight="bold" text-anchor="end" fill="#000000" letter-spacing="0.25" stroke="#000000" stroke-width="0.32">38</text>
<text x="335.5" y="160.5" font-size="5.5" font-weight="bold" text-anchor="end" fill="#000000" letter-spacing="0.25" stroke="#000000" stroke-width="0.2">P0.1/AD1</text>
<rect x="340" y="165" width="15" height="1" fill="#8c0000"/>
<text x="353" y="163.5" font-size="5.5" font-weight="bold" text-anchor="end" fill="#000000" letter-spacing="0.25" stroke="#000000" stroke-width="0.32">37</text>
<text x="335.5" y="167.5" font-size="5.5" font-weight="bold" text-anchor="end" fill="#000000" letter-spacing="0.25" stroke="#000000" stroke-width="0.2">P0.2/AD2</text>
<rect x="340" y="172" width="15" height="1" fill="#8c0000"/>
<text x="353" y="170.5" font-size="5.5" font-weight="bold" text-anchor="end" fill="#000000" letter-spacing="0.25" stroke="#000000" stroke-width="0.32">36</text>
<text x="335.5" y="174.5" font-size="5.5" font-weight="bold" text-anchor="end" fill="#000000" letter-spacing="0.25" stroke="#000000" stroke-width="0.2">P0.3/AD3</text>
<rect x="340" y="180" width="15" height="1" fill="#8c0000"/>
<text x="353" y="178.5" font-size="5.5" font-weight="bold" text-anchor="end" fill="#000000" letter-spacing="0.25" stroke="#000000" stroke-width="0.32">35</text>
<text x="335.5" y="182.5" font-size="5.5" font-weight="bold" text-anchor="end" fill="#000000" letter-spacing="0.25" stroke="#000000" stroke-width="0.2">P0.4/AD4</text>
<rect x="340" y="187" width="15" height="1" fill="#8c0000"/>
<text x="353" y="185.5" font-size="5.5" font-weight="bold" text-anchor="end" fill="#000000" letter-spacing="0.25" stroke="#000000" stroke-width="0.32">34</text>
<text x="335.5" y="189.5" font-size="5.5" font-weight="bold" text-anchor="end" fill="#000000" letter-spacing="0.25" stroke="#000000" stroke-width="0.2">P0.5/AD5</text>
<rect x="340" y="195" width="15" height="1" fill="#8c0000"/>
<text x="353" y="193.5" font-size="5.5" font-weight="bold" text-anchor="end" fill="#000000" letter-spacing="0.25" stroke="#000000" stroke-width="0.32">33</text>
<text x="335.5" y="197.5" font-size="5.5" font-weight="bold" text-anchor="end" fill="#000000" letter-spacing="0.25" stroke="#000000" stroke-width="0.2">P0.6/AD6</text>
<rect x="340" y="202" width="15" height="1" fill="#8c0000"/>
<text x="353" y="200.5" font-size="5.5" font-weight="bold" text-anchor="end" fill="#000000" letter-spacing="0.25" stroke="#000000" stroke-width="0.32">32</text>
<text x="335.5" y="204.5" font-size="5.5" font-weight="bold" text-anchor="end" fill="#000000" letter-spacing="0.25" stroke="#000000" stroke-width="0.2">P0.7/AD7</text>
<rect x="340" y="216" width="15" height="1" fill="#8c0000"/>
<text x="353" y="214.5" font-size="5.5" font-weight="bold" text-anchor="end" fill="#000000" letter-spacing="0.25" stroke="#000000" stroke-width="0.32">21</text>
<text x="335.5" y="218.5" font-size="5.5" font-weight="bold" text-anchor="end" fill="#000000" letter-spacing="0.25" stroke="#000000" stroke-width="0.2">P2.0/A8</text>
<rect x="340" y="223" width="15" height="1" fill="#8c0000"/>
<text x="353" y="221.5" font-size="5.5" font-weight="bold" text-anchor="end" fill="#000000" letter-spacing="0.25" stroke="#000000" stroke-width="0.32">22</text>
<text x="335.5" y="225.5" font-size="5.5" font-weight="bold" text-anchor="end" fill="#000000" letter-spacing="0.25" stroke="#000000" stroke-width="0.2">P2.1/A9</text>
<rect x="340" y="231" width="15" height="1" fill="#8c0000"/>
<text x="353" y="229.5" font-size="5.5" font-weight="bold" text-anchor="end" fill="#000000" letter-spacing="0.25" stroke="#000000" stroke-width="0.32">23</text>
<text x="335.5" y="233.5" font-size="5.5" font-weight="bold" text-anchor="end" fill="#000000" letter-spacing="0.25" stroke="#000000" stroke-width="0.2">P2.2/A10</text>
<rect x="340" y="238" width="15" height="1" fill="#8c0000"/>
<text x="353" y="236.5" font-size="5.5" font-weight="bold" text-anchor="end" fill="#000000" letter-spacing="0.25" stroke="#000000" stroke-width="0.32">24</text>
<text x="335.5" y="240.5" font-size="5.5" font-weight="bold" text-anchor="end" fill="#000000" letter-spacing="0.25" stroke="#000000" stroke-width="0.2">P2.3/A11</text>
<rect x="340" y="246" width="15" height="1" fill="#8c0000"/>
<text x="353" y="244.5" font-size="5.5" font-weight="bold" text-anchor="end" fill="#000000" letter-spacing="0.25" stroke="#000000" stroke-width="0.32">25</text>
<text x="335.5" y="248.5" font-size="5.5" font-weight="bold" text-anchor="end" fill="#000000" letter-spacing="0.25" stroke="#000000" stroke-width="0.2">P2.4/A12</text>
<rect x="340" y="253" width="15" height="1" fill="#8c0000"/>
<text x="353" y="251.5" font-size="5.5" font-weight="bold" text-anchor="end" fill="#000000" letter-spacing="0.25" stroke="#000000" stroke-width="0.32">26</text>
<text x="335.5" y="255.5" font-size="5.5" font-weight="bold" text-anchor="end" fill="#000000" letter-spacing="0.25" stroke="#000000" stroke-width="0.2">P2.5/A13</text>
<rect x="340" y="260" width="15" height="1" fill="#8c0000"/>
<text x="353" y="258.5" font-size="5.5" font-weight="bold" text-anchor="end" fill="#000000" letter-spacing="0.25" stroke="#000000" stroke-width="0.32">27</text>
<text x="335.5" y="262.5" font-size="5.5" font-weight="bold" text-anchor="end" fill="#000000" letter-spacing="0.25" stroke="#000000" stroke-width="0.2">P2.6/A14</text>
<rect x="340" y="268" width="15" height="1" fill="#8c0000"/>
<text x="353" y="266.5" font-size="5.5" font-weight="bold" text-anchor="end" fill="#000000" letter-spacing="0.25" stroke="#000000" stroke-width="0.32">28</text>
<text x="335.5" y="270.5" font-size="5.5" font-weight="bold" text-anchor="end" fill="#000000" letter-spacing="0.25" stroke="#000000" stroke-width="0.2">P2.7/A15</text>
<rect x="340" y="283" width="15" height="1" fill="#8c0000"/>
<text x="353" y="281.5" font-size="5.5" font-weight="bold" text-anchor="end" fill="#000000" letter-spacing="0.25" stroke="#000000" stroke-width="0.32">10</text>
<text x="335.5" y="285.5" font-size="5.5" font-weight="bold" text-anchor="end" fill="#000000" letter-spacing="0.25" stroke="#000000" stroke-width="0.2">P3.0/RXD</text>
<rect x="340" y="290" width="15" height="1" fill="#8c0000"/>
<text x="353" y="288.5" font-size="5.5" font-weight="bold" text-anchor="end" fill="#000000" letter-spacing="0.25" stroke="#000000" stroke-width="0.32">11</text>
<text x="335.5" y="292.5" font-size="5.5" font-weight="bold" text-anchor="end" fill="#000000" letter-spacing="0.25" stroke="#000000" stroke-width="0.2">P3.1/TXD</text>
<rect x="340" y="297" width="15" height="1" fill="#8c0000"/>
<text x="353" y="295.5" font-size="5.5" font-weight="bold" text-anchor="end" fill="#000000" letter-spacing="0.25" stroke="#000000" stroke-width="0.32">12</text>
<text x="335.5" y="299.5" font-size="5.5" font-weight="bold" text-anchor="end" fill="#000000" letter-spacing="0.25" stroke="#000000" stroke-width="0.2">P3.2/INT0</text>
<rect x="340" y="305" width="15" height="1" fill="#8c0000"/>
<text x="353" y="303.5" font-size="5.5" font-weight="bold" text-anchor="end" fill="#000000" letter-spacing="0.25" stroke="#000000" stroke-width="0.32">13</text>
<text x="335.5" y="307.5" font-size="5.5" font-weight="bold" text-anchor="end" fill="#000000" letter-spacing="0.25" stroke="#000000" stroke-width="0.2">P3.3/INT1</text>
<rect x="340" y="312" width="15" height="1" fill="#8c0000"/>
<text x="353" y="310.5" font-size="5.5" font-weight="bold" text-anchor="end" fill="#000000" letter-spacing="0.25" stroke="#000000" stroke-width="0.32">14</text>
<text x="335.5" y="314.5" font-size="5.5" font-weight="bold" text-anchor="end" fill="#000000" letter-spacing="0.25" stroke="#000000" stroke-width="0.2">P3.4/T0</text>
<rect x="340" y="320" width="15" height="1" fill="#8c0000"/>
<text x="353" y="318.5" font-size="5.5" font-weight="bold" text-anchor="end" fill="#000000" letter-spacing="0.25" stroke="#000000" stroke-width="0.32">15</text>
<text x="335.5" y="322.5" font-size="5.5" font-weight="bold" text-anchor="end" fill="#000000" letter-spacing="0.25" stroke="#000000" stroke-width="0.2">P3.5/T1</text>
<rect x="340" y="327" width="15" height="1" fill="#8c0000"/>
<text x="353" y="325.5" font-size="5.5" font-weight="bold" text-anchor="end" fill="#000000" letter-spacing="0.25" stroke="#000000" stroke-width="0.32">16</text>
<text x="335.5" y="329.5" font-size="5.5" font-weight="bold" text-anchor="end" fill="#000000" letter-spacing="0.25" stroke="#000000" stroke-width="0.2">P3.6/WR</text>
<rect x="340" y="334" width="15" height="1" fill="#8c0000"/>
<text x="353" y="332.5" font-size="5.5" font-weight="bold" text-anchor="end" fill="#000000" letter-spacing="0.25" stroke="#000000" stroke-width="0.32">17</text>
<text x="335.5" y="336.5" font-size="5.5" font-weight="bold" text-anchor="end" fill="#000000" letter-spacing="0.25" stroke="#000000" stroke-width="0.2">P3.7/RD</text>
<rect x="322" y="294" width="14" height="1" fill="#000000"/>
<rect x="322" y="302" width="14" height="1" fill="#000000"/>
<rect x="325" y="324" width="11" height="1" fill="#000000"/>
<rect x="326" y="331" width="10" height="1" fill="#000000"/>
<text x="236" y="348" font-size="5.5" font-weight="bold" text-anchor="start" fill="#000000" letter-spacing="0.25" stroke="#000000" stroke-width="0.05">AT89C51</text>
<rect x="355" y="150" width="30" height="1" fill="#004400"/>
<path d="M385.5 150.5L391.5 157.5" stroke="#004400" stroke-width="1" fill="none" shape-rendering="geometricPrecision"/>
<text x="371.5" y="148.5" font-size="5.5" font-weight="bold" text-anchor="middle" fill="#000000" letter-spacing="0.25" stroke="#000000" stroke-width="0.32">1</text>
<rect x="355" y="158" width="30" height="1" fill="#004400"/>
<path d="M385.5 158.5L391.5 165.5" stroke="#004400" stroke-width="1" fill="none" shape-rendering="geometricPrecision"/>
<text x="371.5" y="156.5" font-size="5.5" font-weight="bold" text-anchor="middle" fill="#000000" letter-spacing="0.25" stroke="#000000" stroke-width="0.32">2</text>
<rect x="355" y="165" width="30" height="1" fill="#004400"/>
<path d="M385.5 165.5L391.5 172.5" stroke="#004400" stroke-width="1" fill="none" shape-rendering="geometricPrecision"/>
<text x="371.5" y="163.5" font-size="5.5" font-weight="bold" text-anchor="middle" fill="#000000" letter-spacing="0.25" stroke="#000000" stroke-width="0.32">3</text>
<rect x="355" y="172" width="30" height="1" fill="#004400"/>
<path d="M385.5 172.5L391.5 179.5" stroke="#004400" stroke-width="1" fill="none" shape-rendering="geometricPrecision"/>
<text x="371.5" y="170.5" font-size="5.5" font-weight="bold" text-anchor="middle" fill="#000000" letter-spacing="0.25" stroke="#000000" stroke-width="0.32">4</text>
<rect x="355" y="180" width="30" height="1" fill="#004400"/>
<path d="M385.5 180.5L391.5 187.5" stroke="#004400" stroke-width="1" fill="none" shape-rendering="geometricPrecision"/>
<text x="371.5" y="178.5" font-size="5.5" font-weight="bold" text-anchor="middle" fill="#000000" letter-spacing="0.25" stroke="#000000" stroke-width="0.32">5</text>
<rect x="355" y="187" width="30" height="1" fill="#004400"/>
<path d="M385.5 187.5L391.5 194.5" stroke="#004400" stroke-width="1" fill="none" shape-rendering="geometricPrecision"/>
<text x="371.5" y="185.5" font-size="5.5" font-weight="bold" text-anchor="middle" fill="#000000" letter-spacing="0.25" stroke="#000000" stroke-width="0.32">6</text>
<rect x="355" y="195" width="30" height="1" fill="#004400"/>
<path d="M385.5 195.5L391.5 202.5" stroke="#004400" stroke-width="1" fill="none" shape-rendering="geometricPrecision"/>
<text x="371.5" y="193.5" font-size="5.5" font-weight="bold" text-anchor="middle" fill="#000000" letter-spacing="0.25" stroke="#000000" stroke-width="0.32">7</text>
<rect x="355" y="202" width="30" height="1" fill="#004400"/>
<path d="M385.5 202.5L391.5 209.5" stroke="#004400" stroke-width="1" fill="none" shape-rendering="geometricPrecision"/>
<text x="371.5" y="200.5" font-size="5.5" font-weight="bold" text-anchor="middle" fill="#000000" letter-spacing="0.25" stroke="#000000" stroke-width="0.32">8</text>
<rect x="355" y="216" width="10" height="1" fill="#004400"/>
<circle cx="366.7" cy="216.5" r="2.3" stroke="#004400" stroke-width="1" fill="#fff" shape-rendering="geometricPrecision"/>
<text x="373" y="218.5" font-size="5.5" font-weight="bold" text-anchor="start" fill="#000000" letter-spacing="0.25" stroke="#000000" stroke-width="0.32">CD</text>
<rect x="355" y="268" width="36" height="1" fill="#004400"/>
<rect x="391" y="268" width="16" height="1" fill="#8c0000"/>
<rect x="355" y="283" width="10" height="1" fill="#004400"/>
<circle cx="366.7" cy="283.5" r="2.3" stroke="#004400" stroke-width="1" fill="#fff" shape-rendering="geometricPrecision"/>
<text x="372.5" y="285.5" font-size="5.5" font-weight="bold" text-anchor="start" fill="#000000" letter-spacing="0.25" stroke="#000000" stroke-width="0.08">KEY1</text>
<rect x="355" y="290" width="10" height="1" fill="#004400"/>
<circle cx="366.7" cy="290.5" r="2.3" stroke="#004400" stroke-width="1" fill="#fff" shape-rendering="geometricPrecision"/>
<text x="372.5" y="292.5" font-size="5.5" font-weight="bold" text-anchor="start" fill="#000000" letter-spacing="0.25" stroke="#000000" stroke-width="0.08">KEY2</text>
<rect x="355" y="305" width="10" height="1" fill="#004400"/>
<circle cx="366.7" cy="305.5" r="2.3" stroke="#004400" stroke-width="1" fill="#fff" shape-rendering="geometricPrecision"/>
<text x="372.5" y="307.5" font-size="5.5" font-weight="bold" text-anchor="start" fill="#000000" letter-spacing="0.25" stroke="#000000" stroke-width="0.08">KEY3</text>
<rect x="355" y="327" width="10" height="1" fill="#004400"/>
<circle cx="366.7" cy="327.5" r="2.3" stroke="#004400" stroke-width="1" fill="#fff" shape-rendering="geometricPrecision"/>
<text x="0" y="0" font-size="5.5" font-weight="bold" text-anchor="start" fill="#000000" transform="translate(372.5 329.5) scale(1.25 1)" letter-spacing="0.25" stroke="#000000" stroke-width="0.08">WR</text>
<rect x="355" y="334" width="10" height="1" fill="#004400"/>
<circle cx="366.7" cy="334.5" r="2.3" stroke="#004400" stroke-width="1" fill="#fff" shape-rendering="geometricPrecision"/>
<text x="372.5" y="336.5" font-size="5.5" font-weight="bold" text-anchor="start" fill="#000000" letter-spacing="0.25" stroke="#000000" stroke-width="0.08">RD</text>
<rect x="355" y="297" width="44" height="1" fill="#004400"/>
<rect x="399" y="297" width="15" height="1" fill="#8c0000"/>
<rect x="428" y="61" width="142" height="98" fill="#8c0000"/>
<rect x="429" y="62" width="140" height="96" fill="#c8c8a8"/>
<rect x="436" y="69" width="126" height="67" fill="#000000"/>
<rect x="437" y="70" width="124" height="65" fill="#334400"/>
<text x="428.5" y="59" font-size="9.6" font-weight="normal" text-anchor="start" fill="#000000" stroke="#000000" stroke-width="0.25">LCD1</text>
<rect x="436" y="159" width="1" height="14" fill="#8c0000"/>
<text x="0" y="0" font-size="5.5" font-weight="bold" text-anchor="start" fill="#000000" transform="translate(438 154) rotate(-90)" letter-spacing="0.25" stroke="#000000" stroke-width="0.45">FG</text>
<text x="0" y="0" font-size="5.5" font-weight="bold" text-anchor="end" fill="#000000" transform="translate(434.5 165) rotate(-90)" letter-spacing="0.25" stroke="#000000" stroke-width="0.32">1</text>
<rect x="443" y="159" width="1" height="14" fill="#8c0000"/>
<text x="0" y="0" font-size="5.5" font-weight="bold" text-anchor="start" fill="#000000" transform="translate(445 154) rotate(-90)" letter-spacing="0.25" stroke="#000000" stroke-width="0.45">VSS</text>
<text x="0" y="0" font-size="5.5" font-weight="bold" text-anchor="end" fill="#000000" transform="translate(441.5 165) rotate(-90)" letter-spacing="0.25" stroke="#000000" stroke-width="0.32">2</text>
<rect x="450" y="159" width="1" height="14" fill="#8c0000"/>
<text x="0" y="0" font-size="5.5" font-weight="bold" text-anchor="start" fill="#000000" transform="translate(452 154) rotate(-90)" letter-spacing="0.25" stroke="#000000" stroke-width="0.45">VDD</text>
<text x="0" y="0" font-size="5.5" font-weight="bold" text-anchor="end" fill="#000000" transform="translate(448.5 165) rotate(-90)" letter-spacing="0.25" stroke="#000000" stroke-width="0.32">3</text>
<rect x="458" y="159" width="1" height="14" fill="#8c0000"/>
<text x="0" y="0" font-size="5.5" font-weight="bold" text-anchor="start" fill="#000000" transform="translate(460 154) rotate(-90)" letter-spacing="0.25" stroke="#000000" stroke-width="0.45">VEE</text>
<text x="0" y="0" font-size="5.5" font-weight="bold" text-anchor="end" fill="#000000" transform="translate(456.5 165) rotate(-90)" letter-spacing="0.25" stroke="#000000" stroke-width="0.32">4</text>
<rect x="465" y="159" width="1" height="14" fill="#8c0000"/>
<text x="0" y="0" font-size="5.5" font-weight="bold" text-anchor="start" fill="#000000" transform="translate(467 154) rotate(-90)" letter-spacing="0.25" stroke="#000000" stroke-width="0.45">WR</text>
<rect x="462" y="145" width="1" height="9" fill="#000000"/>
<text x="0" y="0" font-size="5.5" font-weight="bold" text-anchor="end" fill="#000000" transform="translate(463.5 165) rotate(-90)" letter-spacing="0.25" stroke="#000000" stroke-width="0.32">5</text>
<rect x="473" y="159" width="1" height="14" fill="#8c0000"/>
<text x="0" y="0" font-size="5.5" font-weight="bold" text-anchor="start" fill="#000000" transform="translate(475 154) rotate(-90)" letter-spacing="0.25" stroke="#000000" stroke-width="0.45">RD</text>
<rect x="470" y="147" width="1" height="7" fill="#000000"/>
<text x="0" y="0" font-size="5.5" font-weight="bold" text-anchor="end" fill="#000000" transform="translate(471.5 165) rotate(-90)" letter-spacing="0.25" stroke="#000000" stroke-width="0.32">6</text>
<rect x="480" y="159" width="1" height="14" fill="#8c0000"/>
<text x="0" y="0" font-size="5.5" font-weight="bold" text-anchor="start" fill="#000000" transform="translate(482 154) rotate(-90)" letter-spacing="0.25" stroke="#000000" stroke-width="0.45">CE</text>
<rect x="477" y="147" width="1" height="7" fill="#000000"/>
<text x="0" y="0" font-size="5.5" font-weight="bold" text-anchor="end" fill="#000000" transform="translate(478.5 165) rotate(-90)" letter-spacing="0.25" stroke="#000000" stroke-width="0.32">7</text>
<rect x="487" y="159" width="1" height="14" fill="#8c0000"/>
<text x="0" y="0" font-size="5.5" font-weight="bold" text-anchor="start" fill="#000000" transform="translate(489 154) rotate(-90)" letter-spacing="0.25" stroke="#000000" stroke-width="0.45">C/D</text>
<text x="0" y="0" font-size="5.5" font-weight="bold" text-anchor="end" fill="#000000" transform="translate(485.5 165) rotate(-90)" letter-spacing="0.25" stroke="#000000" stroke-width="0.32">8</text>
<rect x="495" y="159" width="1" height="14" fill="#8c0000"/>
<text x="0" y="0" font-size="5.5" font-weight="bold" text-anchor="start" fill="#000000" transform="translate(497 154) rotate(-90)" letter-spacing="0.25" stroke="#000000" stroke-width="0.45">RST</text>
<rect x="492" y="145" width="1" height="9" fill="#000000"/>
<text x="0" y="0" font-size="5.5" font-weight="bold" text-anchor="end" fill="#000000" transform="translate(493.5 165) rotate(-90)" letter-spacing="0.25" stroke="#000000" stroke-width="0.32">9</text>
<rect x="502" y="159" width="1" height="14" fill="#8c0000"/>
<text x="0" y="0" font-size="5.5" font-weight="bold" text-anchor="start" fill="#000000" transform="translate(504 154) rotate(-90) scale(0.8 1)" letter-spacing="0.25" stroke="#000000" stroke-width="0.45">D0</text>
<text x="0" y="0" font-size="5.5" font-weight="bold" text-anchor="end" fill="#000000" transform="translate(500.5 165) rotate(-90)" letter-spacing="0.25" stroke="#000000" stroke-width="0.32">10</text>
<rect x="510" y="159" width="1" height="14" fill="#8c0000"/>
<text x="0" y="0" font-size="5.5" font-weight="bold" text-anchor="start" fill="#000000" transform="translate(512 154) rotate(-90) scale(0.8 1)" letter-spacing="0.25" stroke="#000000" stroke-width="0.45">D1</text>
<text x="0" y="0" font-size="5.5" font-weight="bold" text-anchor="end" fill="#000000" transform="translate(508.5 165) rotate(-90)" letter-spacing="0.25" stroke="#000000" stroke-width="0.32">11</text>
<rect x="517" y="159" width="1" height="14" fill="#8c0000"/>
<text x="0" y="0" font-size="5.5" font-weight="bold" text-anchor="start" fill="#000000" transform="translate(519 154) rotate(-90) scale(0.8 1)" letter-spacing="0.25" stroke="#000000" stroke-width="0.45">D2</text>
<text x="0" y="0" font-size="5.5" font-weight="bold" text-anchor="end" fill="#000000" transform="translate(515.5 165) rotate(-90)" letter-spacing="0.25" stroke="#000000" stroke-width="0.32">12</text>
<rect x="524" y="159" width="1" height="14" fill="#8c0000"/>
<text x="0" y="0" font-size="5.5" font-weight="bold" text-anchor="start" fill="#000000" transform="translate(526 154) rotate(-90) scale(0.8 1)" letter-spacing="0.25" stroke="#000000" stroke-width="0.45">D3</text>
<text x="0" y="0" font-size="5.5" font-weight="bold" text-anchor="end" fill="#000000" transform="translate(522.5 165) rotate(-90)" letter-spacing="0.25" stroke="#000000" stroke-width="0.32">13</text>
<rect x="532" y="159" width="1" height="14" fill="#8c0000"/>
<text x="0" y="0" font-size="5.5" font-weight="bold" text-anchor="start" fill="#000000" transform="translate(534 154) rotate(-90) scale(0.8 1)" letter-spacing="0.25" stroke="#000000" stroke-width="0.45">D4</text>
<text x="0" y="0" font-size="5.5" font-weight="bold" text-anchor="end" fill="#000000" transform="translate(530.5 165) rotate(-90)" letter-spacing="0.25" stroke="#000000" stroke-width="0.32">14</text>
<rect x="539" y="159" width="1" height="14" fill="#8c0000"/>
<text x="0" y="0" font-size="5.5" font-weight="bold" text-anchor="start" fill="#000000" transform="translate(541 154) rotate(-90) scale(0.8 1)" letter-spacing="0.25" stroke="#000000" stroke-width="0.45">D5</text>
<text x="0" y="0" font-size="5.5" font-weight="bold" text-anchor="end" fill="#000000" transform="translate(537.5 165) rotate(-90)" letter-spacing="0.25" stroke="#000000" stroke-width="0.32">15</text>
<rect x="547" y="159" width="1" height="14" fill="#8c0000"/>
<text x="0" y="0" font-size="5.5" font-weight="bold" text-anchor="start" fill="#000000" transform="translate(549 154) rotate(-90) scale(0.8 1)" letter-spacing="0.25" stroke="#000000" stroke-width="0.45">D6</text>
<text x="0" y="0" font-size="5.5" font-weight="bold" text-anchor="end" fill="#000000" transform="translate(545.5 165) rotate(-90)" letter-spacing="0.25" stroke="#000000" stroke-width="0.32">16</text>
<rect x="554" y="159" width="1" height="14" fill="#8c0000"/>
<text x="0" y="0" font-size="5.5" font-weight="bold" text-anchor="start" fill="#000000" transform="translate(556 154) rotate(-90) scale(0.8 1)" letter-spacing="0.25" stroke="#000000" stroke-width="0.45">D7</text>
<text x="0" y="0" font-size="5.5" font-weight="bold" text-anchor="end" fill="#000000" transform="translate(552.5 165) rotate(-90)" letter-spacing="0.25" stroke="#000000" stroke-width="0.32">17</text>
<rect x="561" y="159" width="1" height="14" fill="#8c0000"/>
<text x="0" y="0" font-size="5.5" font-weight="bold" text-anchor="start" fill="#000000" transform="translate(563 154) rotate(-90)" letter-spacing="0.25" stroke="#000000" stroke-width="0.45">FS</text>
<text x="0" y="0" font-size="5.5" font-weight="bold" text-anchor="end" fill="#000000" transform="translate(559.5 165) rotate(-90)" letter-spacing="0.25" stroke="#000000" stroke-width="0.32">18</text>
<rect x="436" y="173" width="1" height="8" fill="#004400"/>
<rect x="436" y="180" width="8" height="1" fill="#004400"/>
<rect x="443" y="173" width="1" height="37" fill="#004400"/>
<rect x="436" y="209" width="16" height="1" fill="#004400"/>
<rect x="440" y="212" width="9" height="1" fill="#004400"/>
<rect x="442" y="216" width="4" height="1" fill="#004400"/>
<rect x="450" y="173" width="1" height="23" fill="#004400"/>
<path d="M413.5 173L417 179.5L410 179.5Z" stroke="#004400" stroke-width="1" fill="none" shape-rendering="geometricPrecision"/>
<rect x="413" y="172" width="1" height="24" fill="#004400"/>
<rect x="413" y="195" width="83" height="1" fill="#004400"/>
<rect x="465" y="173" width="1" height="33" fill="#004400"/>
<circle cx="465.5" cy="207.5" r="2.3" stroke="#004400" stroke-width="1" fill="#fff" shape-rendering="geometricPrecision"/>
<text x="0" y="0" font-size="5.5" font-weight="bold" text-anchor="start" fill="#000000" transform="translate(467.5 221) rotate(-90)" letter-spacing="0.25" stroke="#000000" stroke-width="0.32">WR</text>
<rect x="473" y="173" width="1" height="33" fill="#004400"/>
<circle cx="473.5" cy="207.5" r="2.3" stroke="#004400" stroke-width="1" fill="#fff" shape-rendering="geometricPrecision"/>
<text x="0" y="0" font-size="5.5" font-weight="bold" text-anchor="start" fill="#000000" transform="translate(475.5 221) rotate(-90)" letter-spacing="0.25" stroke="#000000" stroke-width="0.32">RD</text>
<rect x="487" y="173" width="1" height="33" fill="#004400"/>
<circle cx="487.5" cy="207.5" r="2.3" stroke="#004400" stroke-width="1" fill="#fff" shape-rendering="geometricPrecision"/>
<text x="0" y="0" font-size="5.5" font-weight="bold" text-anchor="start" fill="#000000" transform="translate(489.5 221) rotate(-90)" letter-spacing="0.25" stroke="#000000" stroke-width="0.32">CD</text>
<rect x="480" y="173" width="1" height="96" fill="#004400"/>
<rect x="495" y="173" width="1" height="23" fill="#004400"/>
<rect x="502" y="173" width="1" height="51" fill="#004400"/>
<path d="M502.5 223.5L495.5 230.5" stroke="#004400" stroke-width="1" fill="none" shape-rendering="geometricPrecision"/>
<text x="0" y="0" font-size="5.5" font-weight="bold" text-anchor="middle" fill="#000000" transform="translate(499.8 214.5) rotate(-90)" letter-spacing="0.25" stroke="#000000" stroke-width="0.32">1</text>
<rect x="510" y="173" width="1" height="51" fill="#004400"/>
<path d="M510.5 223.5L503.5 230.5" stroke="#004400" stroke-width="1" fill="none" shape-rendering="geometricPrecision"/>
<text x="0" y="0" font-size="5.5" font-weight="bold" text-anchor="middle" fill="#000000" transform="translate(507.8 214.5) rotate(-90)" letter-spacing="0.25" stroke="#000000" stroke-width="0.32">2</text>
<rect x="517" y="173" width="1" height="51" fill="#004400"/>
<path d="M517.5 223.5L510.5 230.5" stroke="#004400" stroke-width="1" fill="none" shape-rendering="geometricPrecision"/>
<text x="0" y="0" font-size="5.5" font-weight="bold" text-anchor="middle" fill="#000000" transform="translate(514.8 214.5) rotate(-90)" letter-spacing="0.25" stroke="#000000" stroke-width="0.32">3</text>
<rect x="524" y="173" width="1" height="51" fill="#004400"/>
<path d="M524.5 223.5L517.5 230.5" stroke="#004400" stroke-width="1" fill="none" shape-rendering="geometricPrecision"/>
<text x="0" y="0" font-size="5.5" font-weight="bold" text-anchor="middle" fill="#000000" transform="translate(521.8 214.5) rotate(-90)" letter-spacing="0.25" stroke="#000000" stroke-width="0.32">4</text>
<rect x="532" y="173" width="1" height="51" fill="#004400"/>
<path d="M532.5 223.5L525.5 230.5" stroke="#004400" stroke-width="1" fill="none" shape-rendering="geometricPrecision"/>
<text x="0" y="0" font-size="5.5" font-weight="bold" text-anchor="middle" fill="#000000" transform="translate(529.8 214.5) rotate(-90)" letter-spacing="0.25" stroke="#000000" stroke-width="0.32">5</text>
<rect x="539" y="173" width="1" height="51" fill="#004400"/>
<path d="M539.5 223.5L532.5 230.5" stroke="#004400" stroke-width="1" fill="none" shape-rendering="geometricPrecision"/>
<text x="0" y="0" font-size="5.5" font-weight="bold" text-anchor="middle" fill="#000000" transform="translate(536.8 214.5) rotate(-90)" letter-spacing="0.25" stroke="#000000" stroke-width="0.32">6</text>
<rect x="547" y="173" width="1" height="51" fill="#004400"/>
<path d="M547.5 223.5L540.5 230.5" stroke="#004400" stroke-width="1" fill="none" shape-rendering="geometricPrecision"/>
<text x="0" y="0" font-size="5.5" font-weight="bold" text-anchor="middle" fill="#000000" transform="translate(544.8 214.5) rotate(-90)" letter-spacing="0.25" stroke="#000000" stroke-width="0.32">7</text>
<rect x="554" y="173" width="1" height="51" fill="#004400"/>
<path d="M554.5 223.5L547.5 230.5" stroke="#004400" stroke-width="1" fill="none" shape-rendering="geometricPrecision"/>
<text x="0" y="0" font-size="5.5" font-weight="bold" text-anchor="middle" fill="#000000" transform="translate(551.8 214.5) rotate(-90)" letter-spacing="0.25" stroke="#000000" stroke-width="0.32">8</text>
<rect x="133" y="275" width="38" height="60" fill="#8c0000"/>
<rect x="134" y="276" width="36" height="58" fill="#c8c8a8"/>
<text x="133" y="274" font-size="9.2" font-weight="normal" text-anchor="start" fill="#000000" stroke="#000000" stroke-width="0.25">U2</text>
<text x="147" y="273" font-size="5.5" font-weight="bold" text-anchor="start" fill="#000000" letter-spacing="0.25" stroke="#000000" stroke-width="0.05">DS1302</text>
<rect x="118" y="283" width="15" height="1" fill="#8c0000"/>
<rect x="103" y="283" width="15" height="1" fill="#004400"/>
<text x="126" y="281.5" font-size="5.5" font-weight="bold" text-anchor="end" fill="#000000" letter-spacing="0.25" stroke="#000000" stroke-width="0.32">3</text>
<text x="137" y="285.5" font-size="5.5" font-weight="bold" text-anchor="start" fill="#000000" letter-spacing="0.25" stroke="#000000" stroke-width="0.1">X2</text>
<rect x="118" y="327" width="15" height="1" fill="#8c0000"/>
<rect x="103" y="327" width="15" height="1" fill="#004400"/>
<text x="126" y="325.5" font-size="5.5" font-weight="bold" text-anchor="end" fill="#000000" letter-spacing="0.25" stroke="#000000" stroke-width="0.32">2</text>
<text x="137" y="329.5" font-size="5.5" font-weight="bold" text-anchor="start" fill="#000000" letter-spacing="0.25" stroke="#000000" stroke-width="0.1">X1</text>
<rect x="171" y="283" width="15" height="1" fill="#8c0000"/>
<text x="177" y="281.5" font-size="5.5" font-weight="bold" text-anchor="start" fill="#000000" letter-spacing="0.25" stroke="#000000" stroke-width="0.32">6</text>
<text x="166.5" y="285.5" font-size="5.5" font-weight="bold" text-anchor="end" fill="#000000" letter-spacing="0.25" stroke="#000000" stroke-width="0.1">I/O</text>
<rect x="171" y="290" width="15" height="1" fill="#8c0000"/>
<text x="177" y="288.5" font-size="5.5" font-weight="bold" text-anchor="start" fill="#000000" letter-spacing="0.25" stroke="#000000" stroke-width="0.32">7</text>
<text x="166.5" y="292.5" font-size="5.5" font-weight="bold" text-anchor="end" fill="#000000" letter-spacing="0.25" stroke="#000000" stroke-width="0.1">SCLK</text>
<rect x="171" y="297" width="15" height="1" fill="#8c0000"/>
<text x="177" y="295.5" font-size="5.5" font-weight="bold" text-anchor="start" fill="#000000" letter-spacing="0.25" stroke="#000000" stroke-width="0.32">5</text>
<text x="166.5" y="299.5" font-size="5.5" font-weight="bold" text-anchor="end" fill="#000000" letter-spacing="0.25" stroke="#000000" stroke-width="0.1">RST</text>
<rect x="171" y="320" width="15" height="1" fill="#8c0000"/>
<text x="177" y="318.5" font-size="5.5" font-weight="bold" text-anchor="start" fill="#000000" letter-spacing="0.25" stroke="#000000" stroke-width="0.32">1</text>
<text x="166.5" y="322.5" font-size="5.5" font-weight="bold" text-anchor="end" fill="#000000" letter-spacing="0.25" stroke="#000000" stroke-width="0.1">VCC2</text>
<rect x="171" y="327" width="15" height="1" fill="#8c0000"/>
<text x="177" y="325.5" font-size="5.5" font-weight="bold" text-anchor="start" fill="#000000" letter-spacing="0.25" stroke="#000000" stroke-width="0.32">8</text>
<text x="166.5" y="329.5" font-size="5.5" font-weight="bold" text-anchor="end" fill="#000000" letter-spacing="0.25" stroke="#000000" stroke-width="0.1">VCC1</text>
<rect x="154" y="294" width="14" height="1" fill="#000000"/>
<rect x="103" y="283" width="1" height="8" fill="#004400"/>
<rect x="103" y="291" width="1" height="7" fill="#8c0000"/>
<rect x="92" y="297" width="24" height="1" fill="#8c0000"/>
<rect x="96" y="301" width="16" height="8" fill="#8c0000"/>
<rect x="97" y="302" width="14" height="6" fill="#c8c8a8"/>
<rect x="92" y="312" width="24" height="1" fill="#8c0000"/>
<rect x="103" y="313" width="1" height="8" fill="#8c0000"/>
<rect x="103" y="321" width="1" height="7" fill="#004400"/>
<text x="0" y="0" font-size="9.2" font-weight="normal" text-anchor="start" fill="#000000" transform="translate(74 305) scale(0.88 1)" stroke="#000000" stroke-width="0.25">X2</text>
<text x="74" y="320.7" font-size="5.5" font-weight="bold" text-anchor="start" fill="#000000" letter-spacing="0.25" stroke="#000000" stroke-width="0.1">32768Hz</text>
<rect x="186" y="283" width="36" height="1" fill="#004400"/>
<rect x="186" y="290" width="36" height="1" fill="#004400"/>
<rect x="186" y="297" width="36" height="1" fill="#004400"/>
<rect x="186" y="320" width="15" height="1" fill="#004400"/>
<path d="M200.5 306L204 312.5L197 312.5Z" stroke="#004400" stroke-width="1" fill="none" shape-rendering="geometricPrecision"/>
<rect x="200" y="305" width="1" height="16" fill="#004400"/>
<rect x="186" y="327" width="15" height="1" fill="#004400"/>
<rect x="200" y="327" width="1" height="38" fill="#004400"/>
<rect x="193" y="364" width="8" height="1" fill="#004400"/>
<rect x="186" y="364" width="7" height="1" fill="#8c0000"/>
<rect x="185" y="353" width="1" height="23" fill="#8c0000"/>
<rect x="181" y="360" width="1" height="9" fill="#8c0000"/>
<path d="M154 364.5H181" stroke="#8c0000" stroke-width="1" stroke-dasharray="3 2" fill="none"/>
<rect x="152" y="353" width="1" height="23" fill="#8c0000"/>
<rect x="148" y="360" width="1" height="9" fill="#8c0000"/>
<rect x="140" y="364" width="8" height="1" fill="#8c0000"/>
<rect x="118" y="364" width="22" height="1" fill="#004400"/>
<rect x="118" y="357" width="1" height="15" fill="#004400"/>
<rect x="115" y="360" width="1" height="9" fill="#004400"/>
<rect x="112" y="363" width="1" height="4" fill="#004400"/>
<text x="148" y="351" font-size="9.2" font-weight="normal" text-anchor="start" fill="#000000" stroke="#000000" stroke-width="0.25">B1</text>
<text x="147" y="382" font-size="5.5" font-weight="bold" text-anchor="start" fill="#000000" letter-spacing="0.25" stroke="#000000" stroke-width="0.05">3.0V</text>
<text x="405.6" y="255.2" font-size="9.2" font-weight="normal" text-anchor="start" fill="#000000" stroke="#000000" stroke-width="0.25">U3:A</text>
<text x="0" y="0" font-size="4.4" font-weight="bold" text-anchor="start" fill="#000000" transform="translate(428 256) scale(1.05 1)" letter-spacing="0.25" stroke="#000000" stroke-width="0.32">74HC04</text>
<path d="M406.5 258.5L420.5 268.5L406.5 279.5Z" stroke="#8c0000" stroke-width="1" fill="#c8c8a8"/>
<circle cx="423" cy="268.5" r="2.3" stroke="#8c0000" stroke-width="1" fill="#fff" shape-rendering="geometricPrecision"/>
<text x="399" y="266" font-size="5.5" font-weight="bold" text-anchor="middle" fill="#000000" letter-spacing="0.25" stroke="#000000" stroke-width="0.32">1</text>
<text x="429" y="266" font-size="5.5" font-weight="bold" text-anchor="middle" fill="#000000" letter-spacing="0.25" stroke="#000000" stroke-width="0.32">2</text>
<rect x="426" y="268" width="11" height="1" fill="#8c0000"/>
<rect x="437" y="268" width="44" height="1" fill="#004400"/>
<path d="M458.5 283.5H425.5A12 14 0 0 0 413.5 297.5A12 15 0 0 0 425.5 312.5H458.5Z" stroke="#8c0000" stroke-width="1" fill="#c8c8a8"/>
<text x="435.7" y="281" font-size="9.2" font-weight="normal" text-anchor="start" fill="#000000" stroke="#000000" stroke-width="0.25">U4:A</text>
<text x="414" y="319" font-size="5.5" font-weight="bold" text-anchor="start" fill="#000000" letter-spacing="0.25" stroke="#000000" stroke-width="0.1">74S15</text>
<text x="402.2" y="295.5" font-size="5.5" font-weight="bold" text-anchor="middle" fill="#000000" letter-spacing="0.25" stroke="#000000" stroke-width="0.32">12</text>
<rect x="459" y="290" width="15" height="1" fill="#8c0000"/>
<text x="464" y="288.5" font-size="5.5" font-weight="bold" text-anchor="start" fill="#000000" letter-spacing="0.25" stroke="#000000" stroke-width="0.32">1</text>
<rect x="459" y="297" width="15" height="1" fill="#8c0000"/>
<text x="464" y="295.5" font-size="5.5" font-weight="bold" text-anchor="start" fill="#000000" letter-spacing="0.25" stroke="#000000" stroke-width="0.32">2</text>
<rect x="459" y="305" width="15" height="1" fill="#8c0000"/>
<text x="464" y="303.5" font-size="5.5" font-weight="bold" text-anchor="start" fill="#000000" letter-spacing="0.25" stroke="#000000" stroke-width="0.32">13</text>
<rect x="474" y="290" width="29" height="1" fill="#004400"/>
<rect x="502" y="275" width="1" height="16" fill="#004400"/>
<rect x="502" y="275" width="19" height="1" fill="#004400"/>
<rect x="480" y="290" width="1" height="40" fill="#004400"/>
<rect x="474" y="297" width="47" height="1" fill="#004400"/>
<rect x="487" y="297" width="1" height="33" fill="#004400"/>
<rect x="474" y="305" width="37" height="1" fill="#004400"/>
<rect x="510" y="305" width="1" height="16" fill="#004400"/>
<rect x="510" y="320" width="11" height="1" fill="#004400"/>
<rect x="495" y="305" width="1" height="25" fill="#004400"/>
<circle cx="480.5" cy="331.5" r="2.3" stroke="#004400" stroke-width="1" fill="#fff" shape-rendering="geometricPrecision"/>
<text x="0" y="0" font-size="5.5" font-weight="bold" text-anchor="start" fill="#000000" transform="translate(482.5 354) rotate(-90)" letter-spacing="0.25" stroke="#000000" stroke-width="0.32">KEY1</text>
<circle cx="487.5" cy="331.5" r="2.3" stroke="#004400" stroke-width="1" fill="#fff" shape-rendering="geometricPrecision"/>
<text x="0" y="0" font-size="5.5" font-weight="bold" text-anchor="start" fill="#000000" transform="translate(489.5 354) rotate(-90)" letter-spacing="0.25" stroke="#000000" stroke-width="0.32">KEY2</text>
<circle cx="495.5" cy="331.5" r="2.3" stroke="#004400" stroke-width="1" fill="#fff" shape-rendering="geometricPrecision"/>
<text x="0" y="0" font-size="5.5" font-weight="bold" text-anchor="start" fill="#000000" transform="translate(497.5 354) rotate(-90)" letter-spacing="0.25" stroke="#000000" stroke-width="0.32">KEY3</text>
<rect x="521" y="275" width="7" height="1" fill="#8c0000"/>
<circle cx="530.5" cy="275.5" r="2.6" stroke="#8c0000" stroke-width="1" fill="#c8c8a8" shape-rendering="geometricPrecision"/>
<circle cx="548.5" cy="275.5" r="2.6" stroke="#8c0000" stroke-width="1" fill="#c8c8a8" shape-rendering="geometricPrecision"/>
<rect x="551" y="275" width="8" height="1" fill="#8c0000"/>
<rect x="559" y="275" width="26" height="1" fill="#004400"/>
<rect x="529" y="269" width="21" height="1" fill="#8c0000"/>
<rect x="533" y="265" width="13" height="5" fill="#8c0000"/>
<rect x="534" y="266" width="11" height="3" fill="#c8c8a8"/>
<circle cx="524.5" cy="268.5" r="2.4" stroke="#ff0000" stroke-width="1" fill="#ff0000" shape-rendering="geometricPrecision"/>
<rect x="523" y="267" width="1" height="2" fill="#600000"/>
<rect x="525" y="269" width="1" height="1" fill="#600000"/>
<rect x="521" y="297" width="7" height="1" fill="#8c0000"/>
<circle cx="530.5" cy="297.5" r="2.6" stroke="#8c0000" stroke-width="1" fill="#c8c8a8" shape-rendering="geometricPrecision"/>
<circle cx="548.5" cy="297.5" r="2.6" stroke="#8c0000" stroke-width="1" fill="#c8c8a8" shape-rendering="geometricPrecision"/>
<rect x="551" y="297" width="8" height="1" fill="#8c0000"/>
<rect x="559" y="297" width="26" height="1" fill="#004400"/>
<rect x="529" y="291" width="21" height="1" fill="#8c0000"/>
<rect x="533" y="287" width="13" height="5" fill="#8c0000"/>
<rect x="534" y="288" width="11" height="3" fill="#c8c8a8"/>
<circle cx="524.5" cy="290.5" r="2.4" stroke="#ff0000" stroke-width="1" fill="#ff0000" shape-rendering="geometricPrecision"/>
<rect x="523" y="289" width="1" height="2" fill="#600000"/>
<rect x="525" y="291" width="1" height="1" fill="#600000"/>
<rect x="521" y="320" width="7" height="1" fill="#8c0000"/>
<circle cx="530.5" cy="320.5" r="2.6" stroke="#8c0000" stroke-width="1" fill="#c8c8a8" shape-rendering="geometricPrecision"/>
<circle cx="548.5" cy="320.5" r="2.6" stroke="#8c0000" stroke-width="1" fill="#c8c8a8" shape-rendering="geometricPrecision"/>
<rect x="551" y="320" width="8" height="1" fill="#8c0000"/>
<rect x="559" y="320" width="26" height="1" fill="#004400"/>
<rect x="529" y="314" width="21" height="1" fill="#8c0000"/>
<rect x="533" y="310" width="13" height="5" fill="#8c0000"/>
<rect x="534" y="311" width="11" height="3" fill="#c8c8a8"/>
<circle cx="524.5" cy="313.5" r="2.4" stroke="#ff0000" stroke-width="1" fill="#ff0000" shape-rendering="geometricPrecision"/>
<rect x="523" y="312" width="1" height="2" fill="#600000"/>
<rect x="525" y="314" width="1" height="1" fill="#600000"/>
<text x="565" y="271" font-size="9.2" font-weight="normal" text-anchor="start" fill="#000000" stroke="#000000" stroke-width="0.25">K1</text>
<text x="565" y="293" font-size="9.2" font-weight="normal" text-anchor="start" fill="#000000" stroke="#000000" stroke-width="0.25">K2</text>
<text x="565" y="316" font-size="9.2" font-weight="normal" text-anchor="start" fill="#000000" stroke="#000000" stroke-width="0.25">K3</text>
<rect x="584" y="275" width="1" height="60" fill="#004400"/>
<rect x="576" y="334" width="16" height="1" fill="#004400"/>
<rect x="580" y="338" width="9" height="1" fill="#004400"/>
<rect x="583" y="342" width="3" height="1" fill="#004400"/>
<rect x="118" y="127" width="1" height="1" fill="#004400"/>
<rect x="177" y="127" width="1" height="1" fill="#004400"/>
<rect x="117" y="172" width="1" height="1" fill="#004400"/>
<rect x="177" y="173" width="1" height="1" fill="#004400"/>
<rect x="214" y="201" width="1" height="1" fill="#004400"/>
<rect x="117" y="231" width="1" height="1" fill="#004400"/>
<rect x="450" y="196" width="1" height="1" fill="#004400"/>
<rect x="444" y="180" width="1" height="1" fill="#004400"/>
<rect x="480" y="289" width="1" height="1" fill="#004400"/>
<rect x="487" y="296" width="1" height="1" fill="#004400"/>
<rect x="495" y="304" width="1" height="1" fill="#004400"/>
<rect x="585" y="297" width="1" height="1" fill="#004400"/>
<path d="M473.00 50.00h1.0v1.0h-1.0zM470.00 51.00h1.0v1.0h-1.0zM471.00 51.00h1.0v1.0h-1.0zM472.00 51.00h1.0v1.0h-1.0zM473.00 51.00h1.0v1.0h-1.0zM474.00 51.00h1.0v1.0h-1.0zM475.00 51.00h1.0v1.0h-1.0zM476.00 51.00h1.0v1.0h-1.0zM473.00 52.00h1.0v1.0h-1.0zM470.00 53.00h1.0v1.0h-1.0zM471.00 53.00h1.0v1.0h-1.0zM472.00 53.00h1.0v1.0h-1.0zM473.00 53.00h1.0v1.0h-1.0zM474.00 53.00h1.0v1.0h-1.0zM475.00 53.00h1.0v1.0h-1.0zM471.00 54.00h1.0v1.0h-1.0zM475.00 54.00h1.0v1.0h-1.0zM472.00 55.00h1.0v1.0h-1.0zM474.00 55.00h1.0v1.0h-1.0zM470.00 56.00h1.0v1.0h-1.0zM471.00 56.00h1.0v1.0h-1.0zM475.00 56.00h1.0v1.0h-1.0zM476.00 56.00h1.0v1.0h-1.0z" fill="#800000"/>
<path d="M479.00 50.00h1.0v1.0h-1.0zM482.00 50.00h1.0v1.0h-1.0zM478.00 51.00h1.0v1.0h-1.0zM479.00 51.00h1.0v1.0h-1.0zM480.00 51.00h1.0v1.0h-1.0zM481.00 51.00h1.0v1.0h-1.0zM482.00 51.00h1.0v1.0h-1.0zM483.00 51.00h1.0v1.0h-1.0zM484.00 51.00h1.0v1.0h-1.0zM479.00 52.00h1.0v1.0h-1.0zM482.00 52.00h1.0v1.0h-1.0zM479.00 53.00h1.0v1.0h-1.0zM480.00 53.00h1.0v1.0h-1.0zM481.00 53.00h1.0v1.0h-1.0zM482.00 53.00h1.0v1.0h-1.0zM483.00 53.00h1.0v1.0h-1.0zM484.00 53.00h1.0v1.0h-1.0zM479.00 54.00h1.0v1.0h-1.0zM480.00 54.00h1.0v1.0h-1.0zM483.00 54.00h1.0v1.0h-1.0zM478.00 55.00h1.0v1.0h-1.0zM479.00 55.00h1.0v1.0h-1.0zM481.00 55.00h1.0v1.0h-1.0zM482.00 55.00h1.0v1.0h-1.0zM483.00 55.00h1.0v1.0h-1.0zM484.00 55.00h1.0v1.0h-1.0zM479.00 56.00h1.0v1.0h-1.0zM482.00 56.00h1.0v1.0h-1.0zM483.00 56.00h1.0v1.0h-1.0z" fill="#800000"/>
<path d="M485.00 50.00h1.0v1.0h-1.0zM486.00 50.00h1.0v1.0h-1.0zM487.00 50.00h1.0v1.0h-1.0zM488.00 50.00h1.0v1.0h-1.0zM489.00 50.00h1.0v1.0h-1.0zM490.00 50.00h1.0v1.0h-1.0zM491.00 50.00h1.0v1.0h-1.0zM490.00 51.00h1.0v1.0h-1.0zM485.00 52.00h1.0v1.0h-1.0zM486.00 52.00h1.0v1.0h-1.0zM487.00 52.00h1.0v1.0h-1.0zM490.00 52.00h1.0v1.0h-1.0zM485.00 53.00h1.0v1.0h-1.0zM487.00 53.00h1.0v1.0h-1.0zM490.00 53.00h1.0v1.0h-1.0zM485.00 54.00h1.0v1.0h-1.0zM486.00 54.00h1.0v1.0h-1.0zM487.00 54.00h1.0v1.0h-1.0zM490.00 54.00h1.0v1.0h-1.0zM490.00 55.00h1.0v1.0h-1.0zM489.00 56.00h1.0v1.0h-1.0zM490.00 56.00h1.0v1.0h-1.0z" fill="#800000"/>
<path d="M493.50 50.00h1.0v1.0h-1.0zM494.50 50.00h1.0v1.0h-1.0zM495.50 50.00h1.0v1.0h-1.0zM496.50 50.00h1.0v1.0h-1.0zM497.50 50.00h1.0v1.0h-1.0zM498.50 50.00h1.0v1.0h-1.0zM498.50 51.00h1.0v1.0h-1.0zM493.50 52.00h1.0v1.0h-1.0zM494.50 52.00h1.0v1.0h-1.0zM495.50 52.00h1.0v1.0h-1.0zM496.50 52.00h1.0v1.0h-1.0zM497.50 52.00h1.0v1.0h-1.0zM498.50 53.00h1.0v1.0h-1.0zM493.50 54.00h1.0v1.0h-1.0zM494.50 54.00h1.0v1.0h-1.0zM495.50 54.00h1.0v1.0h-1.0zM496.50 54.00h1.0v1.0h-1.0zM497.50 54.00h1.0v1.0h-1.0zM498.50 54.00h1.0v1.0h-1.0zM499.50 54.00h1.0v1.0h-1.0zM496.50 55.00h1.0v1.0h-1.0zM495.50 56.00h1.0v1.0h-1.0zM496.50 56.00h1.0v1.0h-1.0z" fill="#800000"/>
<path d="M502.00 50.00h1.0v1.0h-1.0zM505.00 50.00h1.0v1.0h-1.0zM502.00 51.00h1.0v1.0h-1.0zM505.00 51.00h1.0v1.0h-1.0zM507.00 51.00h1.0v1.0h-1.0zM501.00 52.00h1.0v1.0h-1.0zM502.00 52.00h1.0v1.0h-1.0zM503.00 52.00h1.0v1.0h-1.0zM505.00 52.00h1.0v1.0h-1.0zM506.00 52.00h1.0v1.0h-1.0zM502.00 53.00h1.0v1.0h-1.0zM505.00 53.00h1.0v1.0h-1.0zM502.00 54.00h1.0v1.0h-1.0zM505.00 54.00h1.0v1.0h-1.0zM502.00 55.00h1.0v1.0h-1.0zM503.00 55.00h1.0v1.0h-1.0zM505.00 55.00h1.0v1.0h-1.0zM501.00 56.00h1.0v1.0h-1.0zM502.00 56.00h1.0v1.0h-1.0zM504.00 56.00h1.0v1.0h-1.0zM505.00 56.00h1.0v1.0h-1.0zM506.00 56.00h1.0v1.0h-1.0zM507.00 56.00h1.0v1.0h-1.0z" fill="#800000"/>
<path d="M510.50 50.00h1.0v1.0h-1.0zM513.50 50.00h1.0v1.0h-1.0zM509.50 51.00h1.0v1.0h-1.0zM510.50 51.00h1.0v1.0h-1.0zM511.50 51.00h1.0v1.0h-1.0zM513.50 51.00h1.0v1.0h-1.0zM514.50 51.00h1.0v1.0h-1.0zM515.50 51.00h1.0v1.0h-1.0zM509.50 52.00h1.0v1.0h-1.0zM511.50 52.00h1.0v1.0h-1.0zM512.50 52.00h1.0v1.0h-1.0zM515.50 52.00h1.0v1.0h-1.0zM509.50 53.00h1.0v1.0h-1.0zM510.50 53.00h1.0v1.0h-1.0zM511.50 53.00h1.0v1.0h-1.0zM513.50 53.00h1.0v1.0h-1.0zM515.50 53.00h1.0v1.0h-1.0zM509.50 54.00h1.0v1.0h-1.0zM511.50 54.00h1.0v1.0h-1.0zM515.50 54.00h1.0v1.0h-1.0zM509.50 55.00h1.0v1.0h-1.0zM510.50 55.00h1.0v1.0h-1.0zM511.50 55.00h1.0v1.0h-1.0zM515.50 55.00h1.0v1.0h-1.0zM514.50 56.00h1.0v1.0h-1.0zM515.50 56.00h1.0v1.0h-1.0z" fill="#800000"/>
<text x="0" y="0" font-size="8.8" font-weight="normal" text-anchor="start" fill="#800000" transform="translate(518.8 56.8) scale(0.76 1)" stroke="#800000" stroke-width="0.4">PG12864</text>
<path d="M549.00 50.00h1.0v1.0h-1.0zM552.00 50.00h1.0v1.0h-1.0zM550.00 51.00h1.0v1.0h-1.0zM551.00 51.00h1.0v1.0h-1.0zM552.00 51.00h1.0v1.0h-1.0zM553.00 51.00h1.0v1.0h-1.0zM554.00 51.00h1.0v1.0h-1.0zM555.00 51.00h1.0v1.0h-1.0zM549.00 52.00h1.0v1.0h-1.0zM551.00 52.00h1.0v1.0h-1.0zM553.00 52.00h1.0v1.0h-1.0zM550.00 53.00h1.0v1.0h-1.0zM551.00 53.00h1.0v1.0h-1.0zM553.00 53.00h1.0v1.0h-1.0zM554.00 53.00h1.0v1.0h-1.0zM555.00 53.00h1.0v1.0h-1.0zM549.00 54.00h1.0v1.0h-1.0zM551.00 54.00h1.0v1.0h-1.0zM553.00 54.00h1.0v1.0h-1.0zM555.00 54.00h1.0v1.0h-1.0zM550.00 55.00h1.0v1.0h-1.0zM551.00 55.00h1.0v1.0h-1.0zM554.00 55.00h1.0v1.0h-1.0zM549.00 56.00h1.0v1.0h-1.0zM551.00 56.00h1.0v1.0h-1.0zM553.00 56.00h1.0v1.0h-1.0zM555.00 56.00h1.0v1.0h-1.0z" fill="#800000"/>
<path d="M559.00 50.00h1.0v1.0h-1.0zM560.00 50.00h1.0v1.0h-1.0zM561.00 50.00h1.0v1.0h-1.0zM559.00 51.00h1.0v1.0h-1.0zM561.00 51.00h1.0v1.0h-1.0zM559.00 52.00h1.0v1.0h-1.0zM560.00 52.00h1.0v1.0h-1.0zM561.00 52.00h1.0v1.0h-1.0zM557.00 53.00h1.0v1.0h-1.0zM558.00 53.00h1.0v1.0h-1.0zM559.00 53.00h1.0v1.0h-1.0zM561.00 53.00h1.0v1.0h-1.0zM562.00 53.00h1.0v1.0h-1.0zM563.00 53.00h1.0v1.0h-1.0zM557.00 54.00h1.0v1.0h-1.0zM559.00 54.00h1.0v1.0h-1.0zM561.00 54.00h1.0v1.0h-1.0zM563.00 54.00h1.0v1.0h-1.0zM557.00 55.00h1.0v1.0h-1.0zM558.00 55.00h1.0v1.0h-1.0zM559.00 55.00h1.0v1.0h-1.0zM561.00 55.00h1.0v1.0h-1.0zM562.00 55.00h1.0v1.0h-1.0zM563.00 55.00h1.0v1.0h-1.0z" fill="#800000"/>
<path d="M587.50 264.00h1.0v1.0h-1.0zM589.50 264.00h1.0v1.0h-1.0zM590.50 264.00h1.0v1.0h-1.0zM588.50 265.00h1.0v1.0h-1.0zM590.50 265.00h1.0v1.0h-1.0zM587.50 266.00h1.0v1.0h-1.0zM588.50 266.00h1.0v1.0h-1.0zM590.50 266.00h1.0v1.0h-1.0zM591.50 266.00h1.0v1.0h-1.0zM588.50 267.00h1.0v1.0h-1.0zM591.50 267.00h1.0v1.0h-1.0zM587.50 268.00h1.0v1.0h-1.0zM589.50 268.00h1.0v1.0h-1.0zM591.50 268.00h1.0v1.0h-1.0zM588.50 269.00h1.0v1.0h-1.0zM589.50 269.00h1.0v1.0h-1.0z" fill="#000000"/>
<path d="M593.50 264.00h1.0v1.0h-1.0zM594.50 264.00h1.0v1.0h-1.0zM595.50 264.00h1.0v1.0h-1.0zM596.50 264.00h1.0v1.0h-1.0zM593.50 265.00h1.0v1.0h-1.0zM596.50 265.00h1.0v1.0h-1.0zM593.50 266.00h1.0v1.0h-1.0zM594.50 266.00h1.0v1.0h-1.0zM595.50 266.00h1.0v1.0h-1.0zM596.50 266.00h1.0v1.0h-1.0zM593.50 267.00h1.0v1.0h-1.0zM595.50 267.00h1.0v1.0h-1.0zM593.50 268.00h1.0v1.0h-1.0zM594.50 268.00h1.0v1.0h-1.0zM595.50 268.00h1.0v1.0h-1.0zM596.50 268.00h1.0v1.0h-1.0zM593.50 269.00h1.0v1.0h-1.0zM596.50 269.00h1.0v1.0h-1.0z" fill="#000000"/>
<path d="M588.50 286.00h1.0v1.0h-1.0zM590.50 286.00h1.0v1.0h-1.0zM587.50 287.00h1.0v1.0h-1.0zM588.50 287.00h1.0v1.0h-1.0zM589.50 287.00h1.0v1.0h-1.0zM590.50 287.00h1.0v1.0h-1.0zM588.50 288.00h1.0v1.0h-1.0zM590.50 288.00h1.0v1.0h-1.0zM591.50 288.00h1.0v1.0h-1.0zM587.50 289.00h1.0v1.0h-1.0zM588.50 289.00h1.0v1.0h-1.0zM590.50 289.00h1.0v1.0h-1.0zM588.50 290.00h1.0v1.0h-1.0zM590.50 290.00h1.0v1.0h-1.0zM587.50 291.00h1.0v1.0h-1.0zM589.50 291.00h1.0v1.0h-1.0zM590.50 291.00h1.0v1.0h-1.0z" fill="#000000"/>
<path d="M593.50 286.00h1.0v1.0h-1.0zM594.50 286.00h1.0v1.0h-1.0zM595.50 286.00h1.0v1.0h-1.0zM596.50 286.00h1.0v1.0h-1.0zM595.50 287.00h1.0v1.0h-1.0zM593.50 288.00h1.0v1.0h-1.0zM595.50 288.00h1.0v1.0h-1.0zM597.50 288.00h1.0v1.0h-1.0zM593.50 289.00h1.0v1.0h-1.0zM594.50 289.00h1.0v1.0h-1.0zM595.50 289.00h1.0v1.0h-1.0zM596.50 289.00h1.0v1.0h-1.0zM595.50 290.00h1.0v1.0h-1.0zM593.50 291.00h1.0v1.0h-1.0zM594.50 291.00h1.0v1.0h-1.0zM595.50 291.00h1.0v1.0h-1.0zM596.50 291.00h1.0v1.0h-1.0zM597.50 291.00h1.0v1.0h-1.0z" fill="#000000"/>
<path d="M587.50 309.00h1.0v1.0h-1.0zM588.50 309.00h1.0v1.0h-1.0zM589.50 309.00h1.0v1.0h-1.0zM590.50 309.00h1.0v1.0h-1.0zM587.50 310.00h1.0v1.0h-1.0zM590.50 310.00h1.0v1.0h-1.0zM587.50 311.00h1.0v1.0h-1.0zM588.50 311.00h1.0v1.0h-1.0zM589.50 311.00h1.0v1.0h-1.0zM590.50 311.00h1.0v1.0h-1.0zM587.50 312.00h1.0v1.0h-1.0zM589.50 312.00h1.0v1.0h-1.0zM587.50 313.00h1.0v1.0h-1.0zM588.50 313.00h1.0v1.0h-1.0zM589.50 313.00h1.0v1.0h-1.0zM590.50 313.00h1.0v1.0h-1.0zM587.50 314.00h1.0v1.0h-1.0zM590.50 314.00h1.0v1.0h-1.0z" fill="#000000"/>
<path d="M594.50 309.00h1.0v1.0h-1.0zM596.50 309.00h1.0v1.0h-1.0zM593.50 310.00h1.0v1.0h-1.0zM594.50 310.00h1.0v1.0h-1.0zM595.50 310.00h1.0v1.0h-1.0zM596.50 310.00h1.0v1.0h-1.0zM594.50 311.00h1.0v1.0h-1.0zM596.50 311.00h1.0v1.0h-1.0zM597.50 311.00h1.0v1.0h-1.0zM593.50 312.00h1.0v1.0h-1.0zM594.50 312.00h1.0v1.0h-1.0zM596.50 312.00h1.0v1.0h-1.0zM594.50 313.00h1.0v1.0h-1.0zM596.50 313.00h1.0v1.0h-1.0zM593.50 314.00h1.0v1.0h-1.0zM595.50 314.00h1.0v1.0h-1.0zM596.50 314.00h1.0v1.0h-1.0z" fill="#000000"/>
</svg></body></html>
